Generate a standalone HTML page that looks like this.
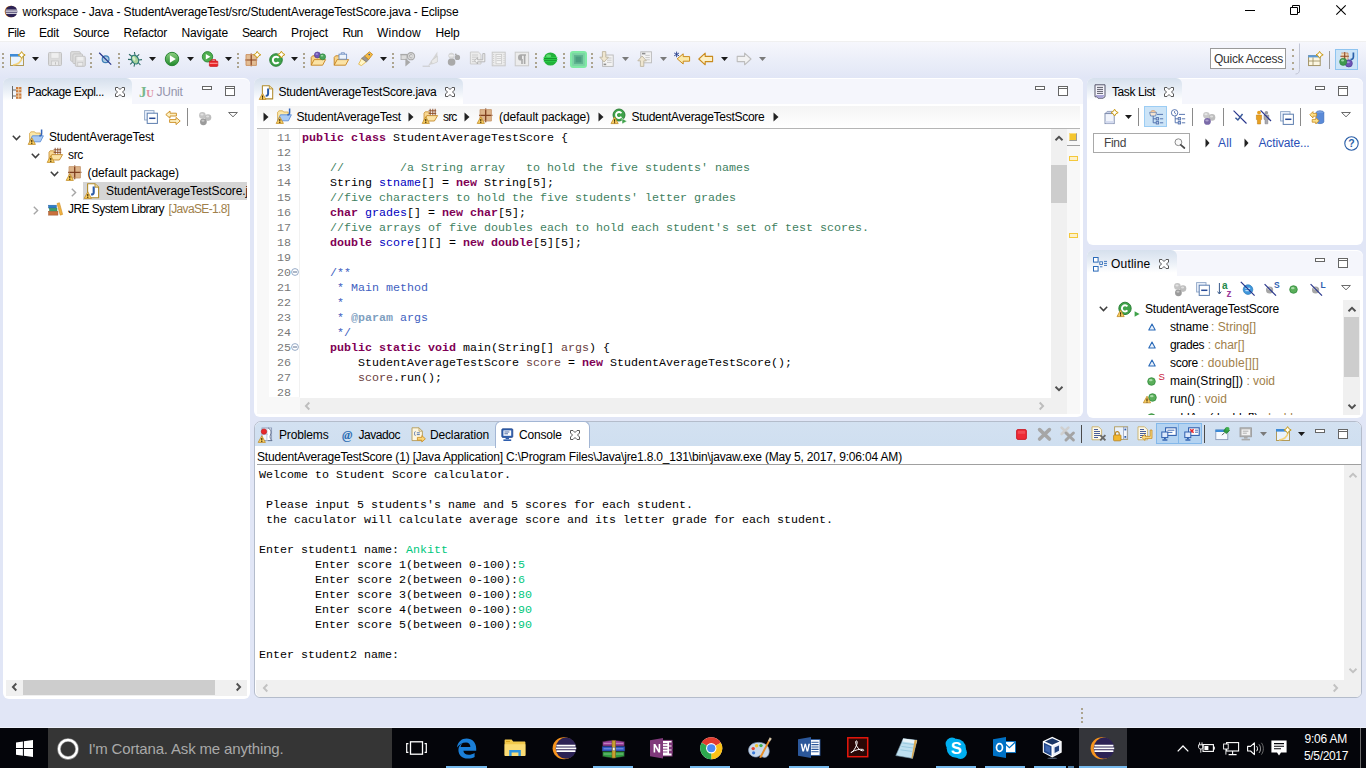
<!DOCTYPE html>
<html lang="en"><head><meta charset="utf-8"><title>workspace - Java - StudentAverageTest/src/StudentAverageTestScore.java - Eclipse</title>
<style>
html,body{margin:0;padding:0;}
body{width:1366px;height:768px;overflow:hidden;position:relative;background:#e1e6f6;font:12px "Liberation Sans", "DejaVu Sans", sans-serif;color:#000;}
body div,body span,body svg{position:absolute;box-sizing:border-box;}
body span{white-space:pre;}
svg{overflow:visible;}
.m{font-family:"Liberation Mono", "DejaVu Sans Mono", monospace;}
</style></head><body>
<div style="left:0px;top:0px;width:1366px;height:41px;background:#fff;"></div>
<div style="left:0px;top:41px;width:1366px;height:1px;background:#f0f0f0;"></div>
<div style="left:0px;top:42px;width:1366px;height:36px;background:linear-gradient(#f6f7fc,#eceff9 45%,#e1e6f6);"></div>
<div style="left:3px;top:78px;width:247px;height:621px;background:#fff;border-radius:6px;"></div>
<div style="left:3px;top:79px;width:247px;height:25px;background:#f5f6fc;border-radius:6px 6px 0 0;"></div>
<div style="left:3px;top:78px;width:129px;height:26px;background:linear-gradient(#d6e0ed,#e8eef6 45%,#fff 88%);border-radius:6px 6px 0 0;"></div>
<div style="left:254px;top:78px;width:829px;height:339px;background:#fff;border-radius:6px;"></div>
<div style="left:254px;top:79px;width:829px;height:25px;background:#f5f6fc;border-radius:6px 6px 0 0;"></div>
<div style="left:254px;top:78px;width:209px;height:26px;background:linear-gradient(#d6e0ed,#e8eef6 45%,#fff 88%);border-radius:6px 6px 0 0;"></div>
<div style="left:1087px;top:78px;width:276px;height:167px;background:#fff;border-radius:6px;"></div>
<div style="left:1087px;top:79px;width:276px;height:25px;background:#f5f6fc;border-radius:6px 6px 0 0;"></div>
<div style="left:1087px;top:78px;width:95px;height:26px;background:linear-gradient(#d6e0ed,#e8eef6 45%,#fff 88%);border-radius:6px 6px 0 0;"></div>
<div style="left:1087px;top:250px;width:276px;height:168px;background:#fff;border-radius:6px;"></div>
<div style="left:1087px;top:251px;width:276px;height:25px;background:#f5f6fc;border-radius:6px 6px 0 0;"></div>
<div style="left:1087px;top:250px;width:90px;height:26px;background:linear-gradient(#d6e0ed,#e8eef6 45%,#fff 88%);border-radius:6px 6px 0 0;"></div>
<div style="left:254px;top:421px;width:1108px;height:277px;background:#fff;border-radius:7px 7px 6px 6px;border:1px solid #b4bccb;"></div>
<div style="left:255px;top:422px;width:1106px;height:24px;background:linear-gradient(#d3e1f1,#cfdff0);border-radius:6px 6px 0 0;"></div>
<div style="left:495px;top:421px;width:95px;height:27px;background:#fff;border:1px solid #a3b6d4;border-bottom:none;border-radius:6px 6px 0 0;"></div>
<div style="left:0px;top:727px;width:1366px;height:1px;background:#eef1fa;"></div>
<div style="left:0px;top:728px;width:1366px;height:40px;background:#04050a;"></div>
<div style="left:48px;top:728px;width:344px;height:40px;background:#353535;"></div>
<div style="left:1079px;top:728px;width:48px;height:40px;background:#34353a;"></div>
<span style="left:22.5px;top:4px;line-height:16px;height:16px;letter-spacing:-0.156px;">workspace - Java - StudentAverageTest/src/StudentAverageTestScore.java - Eclipse</span>
<span style="left:7.5px;top:25px;line-height:16px;height:16px;letter-spacing:-0.461px;">File</span>
<span style="left:39px;top:25px;line-height:16px;height:16px;letter-spacing:-0.172px;">Edit</span>
<span style="left:73px;top:25px;line-height:16px;height:16px;letter-spacing:-0.339px;">Source</span>
<span style="left:123.5px;top:25px;line-height:16px;height:16px;letter-spacing:-0.232px;">Refactor</span>
<span style="left:181.5px;top:25px;line-height:16px;height:16px;letter-spacing:-0.109px;">Navigate</span>
<span style="left:242px;top:25px;line-height:16px;height:16px;letter-spacing:-0.589px;">Search</span>
<span style="left:291px;top:25px;line-height:16px;height:16px;letter-spacing:-0.051px;">Project</span>
<span style="left:342.5px;top:25px;line-height:16px;height:16px;letter-spacing:-0.672px;">Run</span>
<span style="left:377px;top:25px;line-height:16px;height:16px;letter-spacing:0.219px;">Window</span>
<span style="left:435.5px;top:25px;line-height:16px;height:16px;letter-spacing:-0.172px;">Help</span>
<div style="left:1210px;top:48px;width:76px;height:21px;background:#fff;border:1px solid #9a9a9a;"></div>
<span style="left:1214px;top:50.5px;line-height:16px;height:16px;color:#333;letter-spacing:-0.253px;">Quick Access</span>
<span style="left:27.5px;top:83.5px;line-height:16px;height:16px;letter-spacing:-0.459px;">Package Expl...</span>
<span style="left:156.5px;top:83.5px;line-height:16px;height:16px;color:#9494ac;letter-spacing:-0.269px;">JUnit</span>
<span style="left:278.5px;top:83.5px;line-height:16px;height:16px;letter-spacing:-0.234px;">StudentAverageTestScore.java</span>
<span style="left:1112px;top:83.5px;line-height:16px;height:16px;letter-spacing:-0.410px;">Task List</span>
<span style="left:1111px;top:255.5px;line-height:16px;height:16px;letter-spacing:0.210px;">Outline</span>
<div style="left:83px;top:182px;width:164px;height:18px;background:#d5d5d5;"></div>
<span style="left:49px;top:129px;line-height:16px;height:16px;letter-spacing:-0.159px;">StudentAverageTest</span>
<span style="left:68px;top:147px;line-height:16px;height:16px;letter-spacing:-0.333px;">src</span>
<span style="left:87.5px;top:165px;line-height:16px;height:16px;letter-spacing:-0.073px;">(default package)</span>
<span style="left:106px;top:183px;line-height:16px;height:16px;letter-spacing:-0.128px;width:141px;overflow:hidden;">StudentAverageTestScore.j</span>
<span style="left:68px;top:201px;line-height:16px;height:16px;letter-spacing:-0.557px;">JRE System Library</span>
<span style="left:168.5px;top:201px;line-height:16px;height:16px;color:#a0804a;letter-spacing:-0.642px;">[JavaSE-1.8]</span>
<div style="left:257px;top:106px;width:823px;height:22px;background:linear-gradient(#f4f4f4,#fff);"></div>
<div style="left:257px;top:128px;width:823px;height:1px;background:#b5b5b5;"></div>
<span style="left:296.5px;top:108.5px;line-height:16px;height:16px;letter-spacing:-0.187px;">StudentAverageTest</span>
<span style="left:443px;top:108.5px;line-height:16px;height:16px;letter-spacing:-0.833px;">src</span>
<span style="left:499px;top:108.5px;line-height:16px;height:16px;letter-spacing:-0.102px;">(default package)</span>
<span style="left:631.5px;top:108.5px;line-height:16px;height:16px;letter-spacing:-0.270px;">StudentAverageTestScore</span>
<svg style="left:263px;top:112px" width="6" height="10" viewBox="0 0 6 10"><path d="M0.5 0.5 L5.5 5 L0.5 9.5Z" fill="#222"/></svg>
<svg style="left:408.3px;top:112px" width="6" height="10" viewBox="0 0 6 10"><path d="M0.5 0.5 L5.5 5 L0.5 9.5Z" fill="#222"/></svg>
<svg style="left:464.3px;top:112px" width="6" height="10" viewBox="0 0 6 10"><path d="M0.5 0.5 L5.5 5 L0.5 9.5Z" fill="#222"/></svg>
<svg style="left:597.8px;top:112px" width="6" height="10" viewBox="0 0 6 10"><path d="M0.5 0.5 L5.5 5 L0.5 9.5Z" fill="#222"/></svg>
<svg style="left:772.5px;top:112px" width="6" height="10" viewBox="0 0 6 10"><path d="M0.5 0.5 L5.5 5 L0.5 9.5Z" fill="#222"/></svg>
<div style="left:1093px;top:133px;width:97px;height:20px;background:#fff;border:1px solid #a9a9a9;"></div>
<span style="left:1104px;top:135px;line-height:16px;height:16px;color:#444;letter-spacing:-0.336px;">Find</span>
<span style="left:1218px;top:135px;line-height:16px;height:16px;color:#2a4fb5;letter-spacing:0.219px;">All</span>
<span style="left:1258.5px;top:135px;line-height:16px;height:16px;color:#2a4fb5;letter-spacing:-0.153px;">Activate...</span>
<svg style="left:1204.5px;top:138px" width="5" height="10" viewBox="0 0 5 10"><path d="M0.5 0.5 L4.5 5 L0.5 9.5Z" fill="#222"/></svg>
<svg style="left:1244px;top:138px" width="5" height="10" viewBox="0 0 5 10"><path d="M0.5 0.5 L4.5 5 L0.5 9.5Z" fill="#222"/></svg>
<span style="left:1145px;top:301px;line-height:16px;height:16px;letter-spacing:-0.226px;">StudentAverageTestScore</span>
<span style="left:1170px;top:319px;line-height:16px;height:16px;letter-spacing:-0.143px;">stname</span>
<span style="left:1211px;top:319px;line-height:16px;height:16px;color:#a0804a;letter-spacing:0.031px;">: String[]</span>
<span style="left:1170px;top:337px;line-height:16px;height:16px;letter-spacing:-0.451px;">grades</span>
<span style="left:1207.8px;top:337px;line-height:16px;height:16px;color:#a0804a;letter-spacing:0.002px;">: char[]</span>
<span style="left:1170px;top:355px;line-height:16px;height:16px;letter-spacing:-0.269px;">score</span>
<span style="left:1200.7px;top:355px;line-height:16px;height:16px;color:#a0804a;letter-spacing:0.188px;">: double[][]</span>
<span style="left:1170px;top:373px;line-height:16px;height:16px;letter-spacing:0.069px;">main(String[])</span>
<span style="left:1246.4px;top:373px;line-height:16px;height:16px;color:#a0804a;letter-spacing:-0.015px;">: void</span>
<span style="left:1170px;top:391px;line-height:16px;height:16px;letter-spacing:-0.069px;">run()</span>
<span style="left:1198px;top:391px;line-height:16px;height:16px;color:#a0804a;letter-spacing:0.052px;">: void</span>
<div style="left:1140px;top:408px;width:203px;height:7px;overflow:hidden;"></div>
<span style="left:279px;top:426.5px;line-height:16px;height:16px;letter-spacing:-0.148px;">Problems</span>
<span style="left:358.5px;top:426.5px;line-height:16px;height:16px;letter-spacing:-0.458px;">Javadoc</span>
<span style="left:430px;top:426.5px;line-height:16px;height:16px;letter-spacing:-0.155px;">Declaration</span>
<span style="left:519px;top:426.5px;line-height:16px;height:16px;letter-spacing:-0.190px;">Console</span>
<span style="left:257px;top:449px;line-height:16px;height:16px;letter-spacing:-0.175px;">StudentAverageTestScore (1) [Java Application] C:\Program Files\Java\jre1.8.0_131\bin\javaw.exe (May 5, 2017, 9:06:04 AM)</span>
<div style="left:257px;top:464px;width:1104px;height:1px;background:#a0a0a0;"></div>
<span style="left:88.5px;top:738.5px;line-height:20px;height:20px;font-size:15px;color:#a9a9a9;letter-spacing:-0.159px;">I&#x27;m Cortana. Ask me anything.</span>
<span style="left:1304.5px;top:730.5px;line-height:16px;height:16px;color:#fff;letter-spacing:-0.219px;">9:06 AM</span>
<span style="left:1304px;top:747.5px;line-height:16px;height:16px;color:#fff;letter-spacing:-0.340px;">5/5/2017</span>
<div style="left:257px;top:129px;width:12px;height:285px;background:#f8f8f8;"></div>
<div style="left:269px;top:129px;width:31px;height:268px;background:#fff;"></div>
<div style="left:299px;top:129px;width:1px;height:268px;background:#f1f1f1;"></div>
<span class="m" style="left:277px;top:130.5px;line-height:15px;height:15px;font-size:11.67px;color:#787878;letter-spacing:0.000px;">11</span>
<span class="m" style="left:302px;top:130.5px;line-height:15px;height:15px;font-size:11.67px;font-weight:bold;color:#7f0055;letter-spacing:0.003px;">public</span>
<span class="m" style="left:351px;top:130.5px;line-height:15px;height:15px;font-size:11.67px;font-weight:bold;color:#7f0055;letter-spacing:0.003px;">class</span>
<span class="m" style="left:393px;top:130.5px;line-height:15px;height:15px;font-size:11.67px;letter-spacing:0.005px;">StudentAverageTestScore {</span>
<span class="m" style="left:277px;top:145.5px;line-height:15px;height:15px;font-size:11.67px;color:#787878;letter-spacing:0.000px;">12</span>
<span class="m" style="left:277px;top:160.5px;line-height:15px;height:15px;font-size:11.67px;color:#787878;letter-spacing:0.000px;">13</span>
<span class="m" style="left:330px;top:160.5px;line-height:15px;height:15px;font-size:11.67px;color:#3f7f5f;letter-spacing:0.005px;">//        /a String array   to hold the five students&#x27; names</span>
<span class="m" style="left:277px;top:175.5px;line-height:15px;height:15px;font-size:11.67px;color:#787878;letter-spacing:0.000px;">14</span>
<span class="m" style="left:330px;top:175.5px;line-height:15px;height:15px;font-size:11.67px;letter-spacing:0.003px;">String</span>
<span class="m" style="left:379px;top:175.5px;line-height:15px;height:15px;font-size:11.67px;color:#0000c0;letter-spacing:0.003px;">stname</span>
<span class="m" style="left:421px;top:175.5px;line-height:15px;height:15px;font-size:11.67px;letter-spacing:0.004px;">[] =</span>
<span class="m" style="left:456px;top:175.5px;line-height:15px;height:15px;font-size:11.67px;font-weight:bold;color:#7f0055;letter-spacing:0.000px;">new</span>
<span class="m" style="left:484px;top:175.5px;line-height:15px;height:15px;font-size:11.67px;letter-spacing:0.005px;">String[5];</span>
<span class="m" style="left:277px;top:190.5px;line-height:15px;height:15px;font-size:11.67px;color:#787878;letter-spacing:0.000px;">15</span>
<span class="m" style="left:330px;top:190.5px;line-height:15px;height:15px;font-size:11.67px;color:#3f7f5f;letter-spacing:0.005px;">//five characters to hold the five students&#x27; letter grades</span>
<span class="m" style="left:277px;top:205.5px;line-height:15px;height:15px;font-size:11.67px;color:#787878;letter-spacing:0.000px;">16</span>
<span class="m" style="left:330px;top:205.5px;line-height:15px;height:15px;font-size:11.67px;font-weight:bold;color:#7f0055;letter-spacing:0.004px;">char</span>
<span class="m" style="left:365px;top:205.5px;line-height:15px;height:15px;font-size:11.67px;color:#0000c0;letter-spacing:0.003px;">grades</span>
<span class="m" style="left:407px;top:205.5px;line-height:15px;height:15px;font-size:11.67px;letter-spacing:0.004px;">[] =</span>
<span class="m" style="left:442px;top:205.5px;line-height:15px;height:15px;font-size:11.67px;font-weight:bold;color:#7f0055;letter-spacing:0.000px;">new</span>
<span class="m" style="left:470px;top:205.5px;line-height:15px;height:15px;font-size:11.67px;font-weight:bold;color:#7f0055;letter-spacing:0.004px;">char</span>
<span class="m" style="left:498px;top:205.5px;line-height:15px;height:15px;font-size:11.67px;letter-spacing:0.004px;">[5];</span>
<span class="m" style="left:277px;top:220.5px;line-height:15px;height:15px;font-size:11.67px;color:#787878;letter-spacing:0.000px;">17</span>
<span class="m" style="left:330px;top:220.5px;line-height:15px;height:15px;font-size:11.67px;color:#3f7f5f;letter-spacing:0.005px;">//five arrays of five doubles each to hold each student&#x27;s set of test scores.</span>
<span class="m" style="left:277px;top:235.5px;line-height:15px;height:15px;font-size:11.67px;color:#787878;letter-spacing:0.000px;">18</span>
<span class="m" style="left:330px;top:235.5px;line-height:15px;height:15px;font-size:11.67px;font-weight:bold;color:#7f0055;letter-spacing:0.003px;">double</span>
<span class="m" style="left:379px;top:235.5px;line-height:15px;height:15px;font-size:11.67px;color:#0000c0;letter-spacing:0.003px;">score</span>
<span class="m" style="left:414px;top:235.5px;line-height:15px;height:15px;font-size:11.67px;letter-spacing:0.003px;">[][] =</span>
<span class="m" style="left:463px;top:235.5px;line-height:15px;height:15px;font-size:11.67px;font-weight:bold;color:#7f0055;letter-spacing:0.000px;">new</span>
<span class="m" style="left:491px;top:235.5px;line-height:15px;height:15px;font-size:11.67px;font-weight:bold;color:#7f0055;letter-spacing:0.003px;">double</span>
<span class="m" style="left:533px;top:235.5px;line-height:15px;height:15px;font-size:11.67px;letter-spacing:0.004px;">[5][5];</span>
<span class="m" style="left:277px;top:250.5px;line-height:15px;height:15px;font-size:11.67px;color:#787878;letter-spacing:0.000px;">19</span>
<span class="m" style="left:277px;top:265.5px;line-height:15px;height:15px;font-size:11.67px;color:#787878;letter-spacing:0.000px;">20</span>
<span class="m" style="left:330px;top:265.5px;line-height:15px;height:15px;font-size:11.67px;color:#3f5fbf;letter-spacing:0.000px;">/**</span>
<span class="m" style="left:277px;top:280.5px;line-height:15px;height:15px;font-size:11.67px;color:#787878;letter-spacing:0.000px;">21</span>
<span class="m" style="left:337px;top:280.5px;line-height:15px;height:15px;font-size:11.67px;color:#3f5fbf;letter-spacing:0.005px;">* Main method</span>
<span class="m" style="left:277px;top:295.5px;line-height:15px;height:15px;font-size:11.67px;color:#787878;letter-spacing:0.000px;">22</span>
<span class="m" style="left:337px;top:295.5px;line-height:15px;height:15px;font-size:11.67px;color:#3f5fbf;">*</span>
<span class="m" style="left:277px;top:310.5px;line-height:15px;height:15px;font-size:11.67px;color:#787878;letter-spacing:0.000px;">23</span>
<span class="m" style="left:337px;top:310.5px;line-height:15px;height:15px;font-size:11.67px;color:#3f5fbf;">*</span>
<span class="m" style="left:351px;top:310.5px;line-height:15px;height:15px;font-size:11.67px;font-weight:bold;color:#7f9fbf;letter-spacing:0.003px;">@param</span>
<span class="m" style="left:400px;top:310.5px;line-height:15px;height:15px;font-size:11.67px;color:#3f5fbf;letter-spacing:0.004px;">args</span>
<span class="m" style="left:277px;top:325.5px;line-height:15px;height:15px;font-size:11.67px;color:#787878;letter-spacing:0.000px;">24</span>
<span class="m" style="left:337px;top:325.5px;line-height:15px;height:15px;font-size:11.67px;color:#3f5fbf;letter-spacing:0.000px;">*/</span>
<span class="m" style="left:277px;top:340.5px;line-height:15px;height:15px;font-size:11.67px;color:#787878;letter-spacing:0.000px;">25</span>
<span class="m" style="left:330px;top:340.5px;line-height:15px;height:15px;font-size:11.67px;font-weight:bold;color:#7f0055;letter-spacing:0.003px;">public</span>
<span class="m" style="left:379px;top:340.5px;line-height:15px;height:15px;font-size:11.67px;font-weight:bold;color:#7f0055;letter-spacing:0.003px;">static</span>
<span class="m" style="left:428px;top:340.5px;line-height:15px;height:15px;font-size:11.67px;font-weight:bold;color:#7f0055;letter-spacing:0.004px;">void</span>
<span class="m" style="left:463px;top:340.5px;line-height:15px;height:15px;font-size:11.67px;letter-spacing:0.005px;">main(String[]</span>
<span class="m" style="left:561px;top:340.5px;line-height:15px;height:15px;font-size:11.67px;color:#6a3e3e;letter-spacing:0.004px;">args</span>
<span class="m" style="left:589px;top:340.5px;line-height:15px;height:15px;font-size:11.67px;letter-spacing:0.000px;">) {</span>
<span class="m" style="left:277px;top:355.5px;line-height:15px;height:15px;font-size:11.67px;color:#787878;letter-spacing:0.000px;">26</span>
<span class="m" style="left:358px;top:355.5px;line-height:15px;height:15px;font-size:11.67px;letter-spacing:0.005px;">StudentAverageTestScore</span>
<span class="m" style="left:526px;top:355.5px;line-height:15px;height:15px;font-size:11.67px;color:#6a3e3e;letter-spacing:0.003px;">score</span>
<span class="m" style="left:568px;top:355.5px;line-height:15px;height:15px;font-size:11.67px;">=</span>
<span class="m" style="left:582px;top:355.5px;line-height:15px;height:15px;font-size:11.67px;font-weight:bold;color:#7f0055;letter-spacing:0.000px;">new</span>
<span class="m" style="left:610px;top:355.5px;line-height:15px;height:15px;font-size:11.67px;letter-spacing:0.005px;">StudentAverageTestScore();</span>
<span class="m" style="left:277px;top:370.5px;line-height:15px;height:15px;font-size:11.67px;color:#787878;letter-spacing:0.000px;">27</span>
<span class="m" style="left:358px;top:370.5px;line-height:15px;height:15px;font-size:11.67px;color:#6a3e3e;letter-spacing:0.003px;">score</span>
<span class="m" style="left:393px;top:370.5px;line-height:15px;height:15px;font-size:11.67px;letter-spacing:0.004px;">.run();</span>
<span class="m" style="left:277px;top:385.5px;line-height:15px;height:15px;font-size:11.67px;color:#787878;letter-spacing:0.000px;">28</span>
<svg style="left:291px;top:268px" width="8" height="8" viewBox="0 0 8 8"><circle cx="4" cy="4" r="3.4" fill="#fff" stroke="#8aa0c0" stroke-width="0.9"/><path d="M2 4H6" stroke="#5a6f90" stroke-width="1"/></svg>
<svg style="left:291px;top:343px" width="8" height="8" viewBox="0 0 8 8"><circle cx="4" cy="4" r="3.4" fill="#fff" stroke="#8aa0c0" stroke-width="0.9"/><path d="M2 4H6" stroke="#5a6f90" stroke-width="1"/></svg>
<span class="m" style="left:259px;top:467.5px;line-height:15px;height:15px;font-size:11.67px;letter-spacing:0.005px;">Welcome to Student Score calculator.</span>
<span class="m" style="left:266px;top:497.5px;line-height:15px;height:15px;font-size:11.67px;letter-spacing:0.005px;">Please input 5 students&#x27;s name and 5 scores for each student.</span>
<span class="m" style="left:266px;top:512.5px;line-height:15px;height:15px;font-size:11.67px;letter-spacing:0.005px;">the caculator will calculate average score and its letter grade for each student.</span>
<span class="m" style="left:259px;top:542.5px;line-height:15px;height:15px;font-size:11.67px;letter-spacing:0.005px;">Enter student1 name:</span>
<span class="m" style="left:406px;top:542.5px;line-height:15px;height:15px;font-size:11.67px;color:#00c87d;letter-spacing:0.003px;">Ankitt</span>
<span class="m" style="left:315px;top:557.5px;line-height:15px;height:15px;font-size:11.67px;letter-spacing:0.005px;">Enter score 1(between 0-100):</span>
<span class="m" style="left:518px;top:557.5px;line-height:15px;height:15px;font-size:11.67px;color:#00c87d;">5</span>
<span class="m" style="left:315px;top:572.5px;line-height:15px;height:15px;font-size:11.67px;letter-spacing:0.005px;">Enter score 2(between 0-100):</span>
<span class="m" style="left:518px;top:572.5px;line-height:15px;height:15px;font-size:11.67px;color:#00c87d;">6</span>
<span class="m" style="left:315px;top:587.5px;line-height:15px;height:15px;font-size:11.67px;letter-spacing:0.005px;">Enter score 3(between 0-100):</span>
<span class="m" style="left:518px;top:587.5px;line-height:15px;height:15px;font-size:11.67px;color:#00c87d;letter-spacing:0.000px;">80</span>
<span class="m" style="left:315px;top:602.5px;line-height:15px;height:15px;font-size:11.67px;letter-spacing:0.005px;">Enter score 4(between 0-100):</span>
<span class="m" style="left:518px;top:602.5px;line-height:15px;height:15px;font-size:11.67px;color:#00c87d;letter-spacing:0.000px;">90</span>
<span class="m" style="left:315px;top:617.5px;line-height:15px;height:15px;font-size:11.67px;letter-spacing:0.005px;">Enter score 5(between 0-100):</span>
<span class="m" style="left:518px;top:617.5px;line-height:15px;height:15px;font-size:11.67px;color:#00c87d;letter-spacing:0.000px;">90</span>
<span class="m" style="left:259px;top:647.5px;line-height:15px;height:15px;font-size:11.67px;letter-spacing:0.005px;">Enter student2 name:</span>
<div style="left:2px;top:52.5px;width:2px;height:2px;background:#aca48f;"></div>
<div style="left:2px;top:57px;width:2px;height:2px;background:#aca48f;"></div>
<div style="left:2px;top:61.5px;width:2px;height:2px;background:#aca48f;"></div>
<div style="left:2px;top:66px;width:2px;height:2px;background:#aca48f;"></div>
<svg style="left:9px;top:51px;" width="16" height="16" viewBox="0 0 16 16"><rect x="1.5" y="3.5" width="13" height="11" fill="#eaf3fd" stroke="#b29a58"/><rect x="1" y="3" width="14" height="2.6" fill="#3d8ad6"/><path d="M4 14c5-.5 8-3 9-7" stroke="#f3d27a" stroke-width="1.6" fill="none"/><path d="M12.6 0.6l1.300 2.100 2.300 1.300-2.300 1.300-1.300 2.100-1.300-2.100-2.300-1.300 2.300-1.300z" fill="#fff8d8" stroke="#c99a1a" stroke-width="1" stroke-linejoin="round"/><path d="M12.6 2.5v3M11.1 4.0h3" stroke="#fff" stroke-width="1"/></svg>
<svg style="left:32px;top:57px;" width="7" height="4" viewBox="0 0 7 4"><path d="M0 0h7L3.5 4z" fill="#1a1a1a"/></svg>
<svg style="left:47px;top:51px;" width="16" height="16" viewBox="0 0 16 16"><path d="M1.5 2.5a1 1 0 0 1 1-1h11a1 1 0 0 1 1 1v11a1 1 0 0 1-1 1h-11a1 1 0 0 1-1-1z" fill="#dcdcdc" stroke="#c2c2c2"/><rect x="4" y="1.8" width="8" height="5.4" fill="#efefef" stroke="#cfcfcf" stroke-width="0.6"/><rect x="4.5" y="10" width="7" height="4.4" fill="#e9e9e9" stroke="#c4c4c4" stroke-width="0.7"/><path d="M8.5 11.2v2.4" stroke="#c0c0c0"/></svg>
<svg style="left:70px;top:51px;" width="16" height="16" viewBox="0 0 16 16"><g fill="#dedede" stroke="#c4c4c4"><rect x="0.7" y="0.7" width="9.6" height="9.6" rx="1"/><rect x="2.9" y="2.9" width="9.6" height="9.6" rx="1"/><rect x="5.3" y="5.3" width="10" height="10" rx="1"/></g><rect x="7.3" y="5.8" width="6" height="3.6" fill="#efefef"/><rect x="7.8" y="11.6" width="5" height="3.4" fill="#ececec" stroke="#c4c4c4" stroke-width="0.6"/></svg>
<div style="left:90px;top:52.5px;width:2px;height:2px;background:#aca48f;"></div>
<div style="left:90px;top:57px;width:2px;height:2px;background:#aca48f;"></div>
<div style="left:90px;top:61.5px;width:2px;height:2px;background:#aca48f;"></div>
<div style="left:90px;top:66px;width:2px;height:2px;background:#aca48f;"></div>
<svg style="left:98px;top:51px;" width="16" height="16" viewBox="0 0 16 16"><circle cx="7.6" cy="8.2" r="3.4" fill="#a9cbe3" stroke="#3f7fb6" stroke-width="1.2"/><path d="M1.2 1.8L13.2 13.6" stroke="#27348b" stroke-width="1.2"/></svg>
<div style="left:118px;top:52.5px;width:2px;height:2px;background:#aca48f;"></div>
<div style="left:118px;top:57px;width:2px;height:2px;background:#aca48f;"></div>
<div style="left:118px;top:61.5px;width:2px;height:2px;background:#aca48f;"></div>
<div style="left:118px;top:66px;width:2px;height:2px;background:#aca48f;"></div>
<svg style="left:127px;top:51px;" width="16" height="16" viewBox="0 0 16 16"><g stroke="#2d6b63" stroke-width="1.1" fill="none"><path d="M2 3.2l3.4 2.6M1 8.4l3.6.2M3.2 13.4l2.6-2.6M7.4 1l.6 3M12.2 3.4L10 5.4M15 8.6l-3.4.4M13.4 14l-2.6-3M7 15.6l.6-2.6"/></g><ellipse cx="8" cy="8.6" rx="3.3" ry="4.6" transform="rotate(-28 8 8.6)" fill="#a6d39a" stroke="#2d7a78" stroke-width="1.2"/><ellipse cx="7" cy="7.6" rx="1.2" ry="2.2" transform="rotate(-28 7 7.6)" fill="#d7efcf"/></svg>
<svg style="left:149px;top:57px;" width="7" height="4" viewBox="0 0 7 4"><path d="M0 0h7L3.5 4z" fill="#1a1a1a"/></svg>
<svg style="left:164px;top:51px;" width="16" height="16" viewBox="0 0 16 16"><defs><linearGradient id="gr" x1="0" y1="0" x2="0" y2="1"><stop offset="0" stop-color="#8fd083"/><stop offset="1" stop-color="#1f8a2c"/></linearGradient></defs><circle cx="8" cy="8" r="6.7" fill="url(#gr)" stroke="#2a8535" stroke-width="1"/><path d="M5.9 4.2L11.8 8 5.9 11.8z" fill="#fff"/></svg>
<svg style="left:187px;top:57px;" width="7" height="4" viewBox="0 0 7 4"><path d="M0 0h7L3.5 4z" fill="#1a1a1a"/></svg>
<svg style="left:201px;top:51px;" width="16" height="16" viewBox="0 0 16 16"><circle cx="6.5" cy="5.8" r="5.2" fill="#4fae4f" stroke="#2a8535" stroke-width="0.9"/><path d="M4.8 3L9.4 5.8 4.8 8.6z" fill="#fff"/><rect x="8.4" y="10" width="8.4" height="5.4" rx="0.8" fill="#e8272a" stroke="#c4161a" stroke-width="0.7"/><path d="M10.8 10V8.7h3.6V10" stroke="#d81e22" stroke-width="1.1" fill="none"/><path d="M8.6 12.3h8" stroke="#ffb0b0" stroke-width="0.9"/></svg>
<svg style="left:225px;top:57px;" width="7" height="4" viewBox="0 0 7 4"><path d="M0 0h7L3.5 4z" fill="#1a1a1a"/></svg>
<div style="left:237px;top:52.5px;width:2px;height:2px;background:#aca48f;"></div>
<div style="left:237px;top:57px;width:2px;height:2px;background:#aca48f;"></div>
<div style="left:237px;top:61.5px;width:2px;height:2px;background:#aca48f;"></div>
<div style="left:237px;top:66px;width:2px;height:2px;background:#aca48f;"></div>
<svg style="left:245px;top:51px;" width="16" height="16" viewBox="0 0 16 16"><rect x="1" y="3.600" width="10.400" height="10.800" fill="#e3bd94"/><path d="M0.200 9h12M6.200 2.600v12.600" stroke="#8a4422" stroke-width="1.200"/><path d="M1 3.6h10.4v10.8H1z" fill="none" stroke="#c98f5e" stroke-width="0.9"/><path d="M12.2 0.4l1.300 2.100 2.300 1.300-2.300 1.300-1.300 2.100-1.300-2.100-2.300-1.300 2.300-1.300z" fill="#fff8d8" stroke="#c99a1a" stroke-width="1" stroke-linejoin="round"/><path d="M12.2 2.3v3M10.7 3.8h3" stroke="#fff" stroke-width="1"/></svg>
<svg style="left:269px;top:51px;" width="16" height="16" viewBox="0 0 16 16"><circle cx="7" cy="9" r="6.3" fill="#3fa24a" stroke="#257a30" stroke-width="0.9"/><path d="M9.7 6.9A3.3 3.3 0 1 0 9.7 11.1" stroke="#fff" stroke-width="2" fill="none"/><path d="M12.4 0.2l1.300 2.100 2.300 1.300-2.300 1.300-1.300 2.100-1.300-2.100-2.300-1.300 2.300-1.300z" fill="#fff8d8" stroke="#c99a1a" stroke-width="1" stroke-linejoin="round"/><path d="M12.4 2.1v3M10.9 3.6h3" stroke="#fff" stroke-width="1"/></svg>
<svg style="left:291px;top:57px;" width="7" height="4" viewBox="0 0 7 4"><path d="M0 0h7L3.5 4z" fill="#1a1a1a"/></svg>
<div style="left:303px;top:52.5px;width:2px;height:2px;background:#aca48f;"></div>
<div style="left:303px;top:57px;width:2px;height:2px;background:#aca48f;"></div>
<div style="left:303px;top:61.5px;width:2px;height:2px;background:#aca48f;"></div>
<div style="left:303px;top:66px;width:2px;height:2px;background:#aca48f;"></div>
<svg style="left:310px;top:51px;" width="16" height="16" viewBox="0 0 16 16"><path d="M1.2 14.2V6.4l1.4-1.6h4l1 1.4h5.6v2" fill="#f8d48a" stroke="#c5821e" stroke-width="0.9" stroke-linejoin="round"/><path d="M1.2 14.2l3-5.6h11.4l-3 5.6z" fill="#fbe3a6" stroke="#c5821e" stroke-width="0.9" stroke-linejoin="round"/><circle cx="7.4" cy="4" r="3" fill="#6f55b5" stroke="#4b3790" stroke-width="0.6"/><circle cx="12.6" cy="5.8" r="3" fill="#49a55a" stroke="#2b7f3d" stroke-width="0.6"/><ellipse cx="6.8" cy="3" rx="1.3" ry=".8" fill="#b2a2e0"/><ellipse cx="12" cy="4.8" rx="1.3" ry=".8" fill="#a5dcae"/></svg>
<svg style="left:333px;top:51px;" width="16" height="16" viewBox="0 0 16 16"><path d="M1.2 14.2V6.4l1.4-1.6h4l1 1.4h5.6v2" fill="#f8d48a" stroke="#c5821e" stroke-width="0.9" stroke-linejoin="round"/><path d="M1.2 14.2l3-5.6h11.4l-3 5.6z" fill="#fbe3a6" stroke="#c5821e" stroke-width="0.9" stroke-linejoin="round"/><rect x="6" y="3.2" width="7.6" height="5" fill="#eef4fb" stroke="#6f8fc2" stroke-width="0.9"/><path d="M8.2 3V1.8h3.2V3" stroke="#6f8fc2" stroke-width="0.9" fill="none"/></svg>
<svg style="left:357px;top:51px;" width="16" height="16" viewBox="0 0 16 16"><path d="M1.6 13.2l3.2-6 4.6 3.4-5 4z" fill="#fff6c8" stroke="#e3b43c" stroke-width="0.8"/><path d="M4.6 7.4l3-2.4 4 3.6-2.2 2.4z" fill="#9a9590" stroke="#77726c" stroke-width="0.7"/><path d="M7.6 5L12.4 0.8l3.2 2.6-4 5.2z" fill="#f3bb48" stroke="#c4871c" stroke-width="0.8"/><circle cx="12.2" cy="3.6" r="0.8" fill="#2f54a6"/></svg>
<svg style="left:380px;top:57px;" width="7" height="4" viewBox="0 0 7 4"><path d="M0 0h7L3.5 4z" fill="#1a1a1a"/></svg>
<div style="left:392px;top:52.5px;width:2px;height:2px;background:#aca48f;"></div>
<div style="left:392px;top:57px;width:2px;height:2px;background:#aca48f;"></div>
<div style="left:392px;top:61.5px;width:2px;height:2px;background:#aca48f;"></div>
<div style="left:392px;top:66px;width:2px;height:2px;background:#aca48f;"></div>
<svg style="left:400px;top:51px;" width="16" height="16" viewBox="0 0 16 16"><rect x="1" y="3.6" width="6" height="5" fill="#dcdcdc" stroke="#a9a9a9" stroke-width="0.8"/><path d="M0.4 3.6h7.4" stroke="#a9a9a9" stroke-width="1.4"/><path d="M5.4 7.4v8l5-4.2z" fill="#a9a9a9"/><circle cx="11" cy="5.2" r="3.6" fill="#dcdcdc" stroke="#a9a9a9" stroke-width="1.1"/><path d="M12.4 4.2a1.7 1.7 0 1 0 0 2" stroke="#a9a9a9" fill="none" stroke-width="0.9"/></svg>
<svg style="left:422px;top:51px;" width="16" height="16" viewBox="0 0 16 16"><path d="M15.400 0.600v10.400l-9.400 3.800z" fill="#d4d4d4"/><path d="M15.400 5.200l-6.200 4.800 1.200 3 5-2z" fill="#e9e9e9" stroke="#c4c4c4" stroke-width="0.500"/><path d="M0.600 15.200h7.400" stroke="#c4c4c4" stroke-width="0.900"/></svg>
<svg style="left:447px;top:51px;" width="16" height="16" viewBox="0 0 16 16"><circle cx="4.6" cy="11" r="3.8" fill="#a9a9a9"/><circle cx="4.4" cy="4.8" r="2.7" fill="#dcdcdc" stroke="#c9c9c9" stroke-width="0.6"/><path d="M2.2 4.8h4.4" stroke="#fff" stroke-width="0.8"/><circle cx="10.4" cy="6.4" r="2.7" fill="#a9a9a9"/><circle cx="8.8" cy="3.4" r="0.9" fill="#a9a9a9"/></svg>
<svg style="left:469px;top:51px;" width="16" height="16" viewBox="0 0 16 16"><path d="M1.4 1h8l2.6 2.6V13H1.4z" fill="#ebebeb" stroke="#c9c9c9" stroke-width="0.9"/><path d="M3 4h6M3 6.2h6M3 8.4h4M3 10.6h3" stroke="#c9c9c9" stroke-width="0.9"/><path d="M13.8 2.6v6.2H8.6v-2.2l-3 3.2 3 3.2v-2.2h7.2V2.6z" fill="#f4f4f4" stroke="#a9a9a9" stroke-width="0.8" stroke-linejoin="round"/></svg>
<svg style="left:491px;top:51px;" width="16" height="16" viewBox="0 0 16 16"><rect x="1.2" y="1.2" width="13" height="13.6" fill="#ececec" stroke="#c9c9c9" stroke-width="1"/><path d="M2.6 3v10.4M13 3v10.4" stroke="#c9c9c9" stroke-width="0.9" stroke-dasharray="1 1"/><rect x="5" y="3.4" width="5.6" height="9.4" fill="#f6f6f6" stroke="#c9c9c9" stroke-width="0.8"/><path d="M5.6 5.6h4.4M5.6 7.6h4.4M5.6 9.6h4.4" stroke="#c9c9c9" stroke-width="0.9"/></svg>
<svg style="left:514px;top:51px;" width="16" height="16" viewBox="0 0 16 16"><rect x="1.2" y="1.2" width="13.4" height="13.6" fill="#ececec" stroke="#c9c9c9" stroke-width="1"/><path d="M12 4H7.2a2.4 2.4 0 0 0 0 4.8H8V13M10.6 4v9" stroke="#a9a9a9" stroke-width="1.6" fill="none"/><path d="M5 6.4a2.3 2.3 0 0 1 2.3-2.3H8v4.6h-.7A2.3 2.3 0 0 1 5 6.4z" fill="#a9a9a9"/></svg>
<div style="left:535px;top:52.5px;width:2px;height:2px;background:#aca48f;"></div>
<div style="left:535px;top:57px;width:2px;height:2px;background:#aca48f;"></div>
<div style="left:535px;top:61.5px;width:2px;height:2px;background:#aca48f;"></div>
<div style="left:535px;top:66px;width:2px;height:2px;background:#aca48f;"></div>
<svg style="left:543px;top:51px;" width="16" height="16" viewBox="0 0 16 16"><circle cx="7.4" cy="8" r="6.6" fill="#22b23a"/><ellipse cx="5.6" cy="5" rx="2.6" ry="1.8" fill="#6fe07f" opacity=".8"/><path d="M0.4 6.6h14M0.2 8.4h14.4M0.6 10.2h13.6" stroke="#2edc50" stroke-width="0.8"/><path d="M0.8 7.5h13.2M0.8 9.3h13.2" stroke="#128a28" stroke-width="0.7"/></svg>
<div style="left:563px;top:52.5px;width:2px;height:2px;background:#aca48f;"></div>
<div style="left:563px;top:57px;width:2px;height:2px;background:#aca48f;"></div>
<div style="left:563px;top:61.5px;width:2px;height:2px;background:#aca48f;"></div>
<div style="left:563px;top:66px;width:2px;height:2px;background:#aca48f;"></div>
<svg style="left:570px;top:50.5px;" width="17" height="17" viewBox="0 0 17 17"><rect x="0" y="0" width="17" height="17" rx="3" fill="#7fe9a4"/><rect x="2.2" y="2.2" width="12.6" height="12.6" fill="#7bd0a4"/><rect x="4" y="4" width="9" height="9" fill="#5fb58f"/><rect x="5.6" y="5.6" width="5.8" height="5.8" fill="#4c9d80"/></svg>
<div style="left:591px;top:52.5px;width:2px;height:2px;background:#aca48f;"></div>
<div style="left:591px;top:57px;width:2px;height:2px;background:#aca48f;"></div>
<div style="left:591px;top:61.5px;width:2px;height:2px;background:#aca48f;"></div>
<div style="left:591px;top:66px;width:2px;height:2px;background:#aca48f;"></div>
<svg style="left:599px;top:51px;" width="16" height="16" viewBox="0 0 16 16"><rect x="3.6" y="4" width="10.6" height="11.4" fill="#f3f3f3" stroke="#b9b9b9" stroke-width="0.9"/><path d="M8 7h4.6M8 9.2h4.6M8 11.4h4.6" stroke="#c4c4c4" stroke-width="0.9"/><rect x="4.6" y="12.6" width="2.6" height="1.6" fill="#8f8f8f"/><path d="M3.4 0.6h3.4v5.6h2.6L5.1 11 0.8 6.2h2.6z" fill="#efe6d0" stroke="#b8ae98" stroke-width="0.8" stroke-linejoin="round"/></svg>
<svg style="left:622px;top:57px;" width="7" height="4" viewBox="0 0 7 4"><path d="M0 0h7L3.5 4z" fill="#7a7a7a"/></svg>
<svg style="left:637px;top:51px;" width="16" height="16" viewBox="0 0 16 16"><rect x="3.8" y="0.8" width="10.6" height="11" fill="#f3f3f3" stroke="#b9b9b9" stroke-width="0.9"/><path d="M8.4 4.4h4.4M8.4 6.6h4.4M8.4 8.8h4.4" stroke="#c4c4c4" stroke-width="0.9"/><rect x="5" y="1.8" width="3.4" height="1.6" fill="#8f8f8f"/><path d="M3.4 15.4h3.4V9.8h2.6L5.1 5 0.8 9.8h2.6z" fill="#efe6d0" stroke="#b8ae98" stroke-width="0.8" stroke-linejoin="round"/></svg>
<svg style="left:660px;top:57px;" width="7" height="4" viewBox="0 0 7 4"><path d="M0 0h7L3.5 4z" fill="#7a7a7a"/></svg>
<svg style="left:674px;top:51px;" width="16" height="16" viewBox="0 0 16 16"><path d="M3.2 7.8l6-5v2.8h6.4v4.6H9.2V13z" fill="#fbe9a8" stroke="#c98a1c" stroke-width="1" stroke-linejoin="round"/><path d="M2.6 0.6v5.6M0.2 2l4.8 2.8M5 2L0.2 4.8" stroke="#27408b" stroke-width="0.9"/></svg>
<svg style="left:698px;top:51px;" width="16" height="16" viewBox="0 0 16 16"><path d="M0.8 8l6.4-5.8v3.2h7.4v5.2H7.2v3.2z" fill="#fdf0c4" stroke="#c98a1c" stroke-width="1.1" stroke-linejoin="round"/></svg>
<svg style="left:721px;top:57px;" width="7" height="4" viewBox="0 0 7 4"><path d="M0 0h7L3.5 4z" fill="#1a1a1a"/></svg>
<svg style="left:736px;top:51px;" width="16" height="16" viewBox="0 0 16 16"><path d="M15 8L8.6 2.2v3.2H1.2v5.2h7.4v3.2z" fill="#f2f2f2" stroke="#bdbdbd" stroke-width="1.1" stroke-linejoin="round"/></svg>
<svg style="left:759px;top:57px;" width="7" height="4" viewBox="0 0 7 4"><path d="M0 0h7L3.5 4z" fill="#7a7a7a"/></svg>
<div style="left:1292px;top:48.5px;width:2px;height:2px;background:#b0a892;"></div>
<div style="left:1292px;top:55px;width:2px;height:2px;background:#b0a892;"></div>
<div style="left:1292px;top:61.5px;width:2px;height:2px;background:#b0a892;"></div>
<div style="left:1292px;top:68px;width:2px;height:2px;background:#b0a892;"></div>
<svg style="left:1293px;top:43px" width="8" height="32" viewBox="0 0 8 32"><path d="M6.500 0.500v26c0 3-1.500 4.500-4 4.500" fill="none" stroke="#c3c7d6" stroke-width="1"/></svg>
<svg style="left:1307px;top:51px;" width="16" height="16" viewBox="0 0 16 16"><rect x="1.600" y="4.600" width="11.600" height="10" fill="#fbf6e2" stroke="#9a8a5a" stroke-width="0.900"/><rect x="1.200" y="4.200" width="12.400" height="2.200" fill="#5a9ad8"/><path d="M6 6.400v8M1.600 10h11.600" stroke="#9a8a5a" stroke-width="0.800"/><path d="M12.6 0.4l1.300 2.100 2.300 1.300-2.300 1.300-1.300 2.100-1.300-2.100-2.300-1.300 2.300-1.300z" fill="#fff8d8" stroke="#c99a1a" stroke-width="1" stroke-linejoin="round"/><path d="M12.6 2.3v3M11.1 3.8h3" stroke="#fff" stroke-width="1"/></svg>
<div style="left:1329px;top:51px;width:1px;height:18px;background:#9a9a9a;"></div>
<div style="left:1335px;top:49px;width:23px;height:21px;background:#cce4f7;border:1px solid #8fc4f0;"></div>
<svg style="left:1338.5px;top:52px;" width="16" height="16" viewBox="0 0 16 16"><rect x="2.400" y="1" width="6.600" height="6.600" fill="#f0d8b8"/><path d="M1.400 4.300h8.600M5.700 0v8.600" stroke="#8a4422" stroke-width="1.100"/><path d="M2.400 1h6.600v6.600" fill="none" stroke="#b87a4a" stroke-width="0.700"/><circle cx="9.800" cy="11.400" r="3.600" fill="#6f55b5" stroke="#4b3790" stroke-width="0.600"/><ellipse cx="9.200" cy="10.200" rx="1.600" ry="1" fill="#a898d8"/><circle cx="4.200" cy="9.800" r="3.600" fill="#3f9a4f" stroke="#2b7f3d" stroke-width="0.600"/><ellipse cx="3.600" cy="8.600" rx="1.600" ry="1" fill="#9ad8a4"/><path d="M14.400 0.600v4.200c0 1.900-1.100 2.700-2.900 2.500" stroke="#2a5fa8" stroke-width="1.700" fill="none"/></svg>
<svg style="left:4px;top:5px;" width="14" height="13" viewBox="0 0 16 16"><ellipse cx="7.7" cy="8" rx="7.5" ry="7.2" fill="#f7941e"/><ellipse cx="8.4" cy="8" rx="7.4" ry="7.2" fill="#2c2255"/><path d="M1.6 6.300h14M1.300 8.300h14.600M1.800 10.300h13.800" stroke="#fff" stroke-width="1.100"/></svg>
<svg style="left:1245px;top:5px" width="102" height="10" viewBox="0 0 102 10"><path d="M0 5.500h10" stroke="#000" stroke-width="1"/><path d="M45.500 2.500h7v7h-7zM47.500 2.500v-2h7v7h-2" fill="none" stroke="#000" stroke-width="1"/><path d="M91.300 0.300l9.400 9.400M100.700 0.300l-9.400 9.400" stroke="#000" stroke-width="1.100"/></svg>
<svg style="left:11px;top:84.5px;" width="11" height="14" viewBox="0 0 11 14"><path d="M1.5 1v13M1.5 5h3.5M1.5 11h3.5" stroke="#6a6a6a" stroke-width="1" fill="none"/><rect x="5" y="2" width="5.4" height="5.4" fill="#c97a3c"/><rect x="5" y="8.4" width="5.4" height="5.4" fill="#c97a3c"/><path d="M5 4.7h5.4M7.7 2v5.4M5 11.1h5.4M7.7 8.4v5.4" stroke="#f6d8b0" stroke-width="0.9"/></svg>
<svg style="left:115px;top:87px;" width="10" height="10" viewBox="0 0 10 10"><path d="M0.500 0.500H3L5 2.500 7 0.500H9.500V3L7.500 5l2 2v2.500H7L5 7.500 3 9.500H0.500V7l2-2-2-2z" fill="#fff" stroke="#585858" stroke-width="1" stroke-linejoin="miter"/></svg>
<svg style="left:138.5px;top:84px;" width="16" height="16" viewBox="0 0 16 16"><text x="0" y="12.500" font-family="Liberation Serif, serif" font-weight="bold" font-size="15" fill="#78b88e">J</text><text x="7.300" y="12.900" font-family="Liberation Serif, serif" font-weight="bold" font-size="10.500" fill="#e08e9c">U</text></svg>
<svg style="left:202px;top:86px;" width="10" height="4" viewBox="0 0 10 4"><rect x="0.5" y="0.5" width="9" height="3" fill="#fff" stroke="#666"/></svg>
<svg style="left:225px;top:86px;" width="10" height="10" viewBox="0 0 10 10"><rect x="0.5" y="0.5" width="9" height="9" fill="#fff" stroke="#666"/><path d="M0.500 2.500h9" stroke="#666" stroke-width="1"/></svg>
<svg style="left:144px;top:110px;" width="14" height="14" viewBox="0 0 14 14"><rect x="0.6" y="0.6" width="9.4" height="9.4" fill="#eaf1fb" stroke="#8fa6c6" stroke-width="0.9"/><rect x="3.2" y="3.2" width="10.2" height="10.2" fill="#fff" stroke="#5d7eaf" stroke-width="1"/><path d="M5.2 8.3h6.2" stroke="#274a96" stroke-width="1.5"/></svg>
<svg style="left:165px;top:110px;" width="16" height="16" viewBox="0 0 16 16"><path d="M0.8 4.6L5 1v2.2h6.4v2.8H5v2.2z" fill="#fdf0c4" stroke="#c98a1c" stroke-width="0.9" stroke-linejoin="round"/><path d="M15.2 11L11 7.4v2.2H4.6v2.8H11v2.2z" fill="#fdf0c4" stroke="#c98a1c" stroke-width="0.9" stroke-linejoin="round"/></svg>
<div style="left:187px;top:108px;width:1px;height:18px;background:#8a8a8a;"></div>
<svg style="left:198px;top:110.5px;" width="14" height="14" viewBox="0 0 14 14"><circle cx="4.4" cy="4.4" r="3.3" fill="#c4c4c4"/><circle cx="10" cy="6.6" r="3.3" fill="#bdbdbd"/><circle cx="5.4" cy="10.8" r="3.4" fill="#9b9b9b"/><ellipse cx="4" cy="3.4" rx="1.6" ry="1" fill="#e2e2e2"/><ellipse cx="9.6" cy="5.6" rx="1.6" ry="1" fill="#dedede"/><ellipse cx="5" cy="9.8" rx="1.6" ry="1" fill="#c6c6c6"/></svg>
<svg style="left:228px;top:112px;" width="10" height="5.5" viewBox="0 0 10 5.5"><path d="M0.6 0.5h8.8L5 4.8z" fill="#fff" stroke="#5a5a5a" stroke-width="0.9" stroke-linejoin="round"/></svg>
<svg style="left:12px;top:135px;" width="9" height="6" viewBox="0 0 9 6"><path d="M0.8 0.8L4.5 4.6 8.2 0.8" fill="none" stroke="#3e3e3e" stroke-width="1.5"/></svg>
<svg style="left:28px;top:129px;" width="16" height="16" viewBox="0 0 16 16"><path d="M1.6 12.8V4.2l1.4-1.4h3.6l1 1.2h4.6v2" fill="#fbe7a8" stroke="#d3a545" stroke-width="0.8" stroke-linejoin="round"/><path d="M1.6 12.8L4.4 6.8h11l-3 6z" fill="#a9cbf5" stroke="#5f8fd6" stroke-width="0.9" stroke-linejoin="round"/><path d="M13.6 0.4v4.4c0 1.5-.9 2.1-2.3 1.9" stroke="#3565b8" stroke-width="1.5" fill="none"/><path d="M3.8 8.799999999999999l3.6 6.6h-7.2z" fill="#f9cf62" stroke="#c08a24" stroke-width="0.8" stroke-linejoin="round"/><path d="M3.8 11.1v2.4M3.8 14.1v1" stroke="#3a2400" stroke-width="1.1"/></svg>
<svg style="left:31px;top:153px;" width="9" height="6" viewBox="0 0 9 6"><path d="M0.8 0.8L4.5 4.6 8.2 0.8" fill="none" stroke="#3e3e3e" stroke-width="1.5"/></svg>
<svg style="left:47px;top:147px;" width="16" height="16" viewBox="0 0 16 16"><path d="M2 13V5.2l1.2-1.4h3.4l1 1.2h1" fill="#f8d894" stroke="#c58a2a" stroke-width="0.8" stroke-linejoin="round"/><path d="M2 13l2.8-5.4h10.8l-3.2 5.4z" fill="#fbe3a6" stroke="#c58a2a" stroke-width="0.9" stroke-linejoin="round"/><path d="M6.6 2.8h7.6M6.6 5.4h7.6M8.2 0.8v6.4M10.8 0.8v6.4M13.2 0.8v6.4" stroke="#8a4a22" stroke-width="0.9"/><path d="M3.8 8.799999999999999l3.6 6.6h-7.2z" fill="#f9cf62" stroke="#c08a24" stroke-width="0.8" stroke-linejoin="round"/><path d="M3.8 11.1v2.4M3.8 14.1v1" stroke="#3a2400" stroke-width="1.1"/></svg>
<svg style="left:50px;top:171px;" width="9" height="6" viewBox="0 0 9 6"><path d="M0.8 0.8L4.5 4.6 8.2 0.8" fill="none" stroke="#3e3e3e" stroke-width="1.5"/></svg>
<svg style="left:66px;top:165px;" width="16" height="16" viewBox="0 0 16 16"><rect x="3" y="1.6" width="11.400" height="11.400" fill="#ddb48a"/><path d="M2 7.300h13.400M8.700 0.400v13.800" stroke="#7f3f1f" stroke-width="1.300"/><path d="M3 1.6h11.4v11.4H3z" fill="none" stroke="#c49468" stroke-width="0.8"/><path d="M3.8 8.799999999999999l3.6 6.6h-7.2z" fill="#f9cf62" stroke="#c08a24" stroke-width="0.8" stroke-linejoin="round"/><path d="M3.8 11.1v2.4M3.8 14.1v1" stroke="#3a2400" stroke-width="1.1"/></svg>
<svg style="left:71px;top:188px;" width="6" height="9" viewBox="0 0 6 9"><path d="M0.8 0.8L4.6 4.5 0.8 8.2" fill="none" stroke="#a6a6a6" stroke-width="1.4"/></svg>
<svg style="left:84px;top:183px;" width="16" height="16" viewBox="0 0 16 16"><path d="M3.600 0.800h7.400l3.600 3.400v10.600H3.600z" fill="#fff" stroke="#b08a2a" stroke-width="1.100" stroke-linejoin="round"/><path d="M11 0.800v3.400h3.600" fill="#f0dca0" stroke="#b08a2a" stroke-width="0.900"/><path d="M9.700 3.600v5.800c0 1.600-1 2.200-2.600 1.900" stroke="#2a5aa8" stroke-width="2.100" fill="none"/><path d="M3.8 8.799999999999999l3.6 6.6h-7.2z" fill="#f9cf62" stroke="#c08a24" stroke-width="0.8" stroke-linejoin="round"/><path d="M3.8 11.1v2.4M3.8 14.1v1" stroke="#3a2400" stroke-width="1.1"/></svg>
<svg style="left:33px;top:206px;" width="6" height="9" viewBox="0 0 6 9"><path d="M0.8 0.8L4.6 4.5 0.8 8.2" fill="none" stroke="#a6a6a6" stroke-width="1.4"/></svg>
<svg style="left:47.5px;top:202px;" width="15" height="15" viewBox="0 0 16 16"><rect x="0.6" y="3.4" width="8.4" height="3" fill="#2f7fc9" stroke="#1f5f9f" stroke-width="0.5"/><rect x="1.6" y="6.6" width="8" height="3.2" fill="#3f9f6a" stroke="#2a7a4a" stroke-width="0.5"/><rect x="0.6" y="10" width="10" height="4" fill="#c9703c" stroke="#9a4f24" stroke-width="0.5"/><path d="M9.6 1.6l2.6-0.8 3.4 12.4-2.6 0.8z" fill="#f1b243" stroke="#c98a1c" stroke-width="0.6"/></svg>
<div style="left:6px;top:680px;width:241px;height:16px;background:#f0f0f0;"></div>
<div style="left:23px;top:680px;width:192px;height:15px;background:#cdcdcd;"></div>
<svg style="left:10.5px;top:682px" width="7" height="10" viewBox="0 0 7 10"><path d="M5.300 1.500L1.900 5l3.400 3.500" fill="none" stroke="#505050" stroke-width="1.900"/></svg>
<svg style="left:234.5px;top:682px" width="7" height="10" viewBox="0 0 7 10"><path d="M1.700 1.500L5.100 5l-3.400 3.500" fill="none" stroke="#505050" stroke-width="1.900"/></svg>
<svg style="left:258.5px;top:84.5px;" width="15" height="15" viewBox="0 0 16 16"><path d="M3.600 0.800h7.400l3.600 3.400v10.600H3.600z" fill="#fff" stroke="#b08a2a" stroke-width="1.100" stroke-linejoin="round"/><path d="M11 0.800v3.400h3.600" fill="#f0dca0" stroke="#b08a2a" stroke-width="0.900"/><path d="M9.700 3.600v5.800c0 1.600-1 2.200-2.600 1.900" stroke="#2a5aa8" stroke-width="2.100" fill="none"/><path d="M3.8 8.799999999999999l3.6 6.6h-7.2z" fill="#f9cf62" stroke="#c08a24" stroke-width="0.8" stroke-linejoin="round"/><path d="M3.8 11.1v2.4M3.8 14.1v1" stroke="#3a2400" stroke-width="1.1"/></svg>
<svg style="left:445px;top:87px;" width="10" height="10" viewBox="0 0 10 10"><path d="M0.500 0.500H3L5 2.500 7 0.500H9.500V3L7.500 5l2 2v2.500H7L5 7.500 3 9.500H0.500V7l2-2-2-2z" fill="#fff" stroke="#585858" stroke-width="1" stroke-linejoin="miter"/></svg>
<svg style="left:1035px;top:86px;" width="10" height="4" viewBox="0 0 10 4"><rect x="0.5" y="0.5" width="9" height="3" fill="#fff" stroke="#666"/></svg>
<svg style="left:1058px;top:86px;" width="10" height="10" viewBox="0 0 10 10"><rect x="0.5" y="0.5" width="9" height="9" fill="#fff" stroke="#666"/><path d="M0.500 2.500h9" stroke="#666" stroke-width="1"/></svg>
<svg style="left:276px;top:108px;" width="16" height="16" viewBox="0 0 16 16"><path d="M1.6 12.8V4.2l1.4-1.4h3.6l1 1.2h4.6v2" fill="#fbe7a8" stroke="#d3a545" stroke-width="0.8" stroke-linejoin="round"/><path d="M1.6 12.8L4.4 6.8h11l-3 6z" fill="#a9cbf5" stroke="#5f8fd6" stroke-width="0.9" stroke-linejoin="round"/><path d="M13.6 0.4v4.4c0 1.5-.9 2.1-2.3 1.9" stroke="#3565b8" stroke-width="1.5" fill="none"/><path d="M3.8 8.799999999999999l3.6 6.6h-7.2z" fill="#f9cf62" stroke="#c08a24" stroke-width="0.8" stroke-linejoin="round"/><path d="M3.8 11.1v2.4M3.8 14.1v1" stroke="#3a2400" stroke-width="1.1"/></svg>
<svg style="left:422px;top:108px;" width="16" height="16" viewBox="0 0 16 16"><path d="M2 13V5.2l1.2-1.4h3.4l1 1.2h1" fill="#f8d894" stroke="#c58a2a" stroke-width="0.8" stroke-linejoin="round"/><path d="M2 13l2.8-5.4h10.8l-3.2 5.4z" fill="#fbe3a6" stroke="#c58a2a" stroke-width="0.9" stroke-linejoin="round"/><path d="M6.6 2.8h7.6M6.6 5.4h7.6M8.2 0.8v6.4M10.8 0.8v6.4M13.2 0.8v6.4" stroke="#8a4a22" stroke-width="0.9"/><path d="M3.8 8.799999999999999l3.6 6.6h-7.2z" fill="#f9cf62" stroke="#c08a24" stroke-width="0.8" stroke-linejoin="round"/><path d="M3.8 11.1v2.4M3.8 14.1v1" stroke="#3a2400" stroke-width="1.1"/></svg>
<svg style="left:477px;top:108px;" width="16" height="16" viewBox="0 0 16 16"><rect x="3" y="1.6" width="11.400" height="11.400" fill="#ddb48a"/><path d="M2 7.300h13.400M8.700 0.400v13.800" stroke="#7f3f1f" stroke-width="1.300"/><path d="M3 1.6h11.4v11.4H3z" fill="none" stroke="#c49468" stroke-width="0.8"/><path d="M3.8 8.799999999999999l3.6 6.6h-7.2z" fill="#f9cf62" stroke="#c08a24" stroke-width="0.8" stroke-linejoin="round"/><path d="M3.8 11.1v2.4M3.8 14.1v1" stroke="#3a2400" stroke-width="1.1"/></svg>
<svg style="left:611px;top:108px;" width="16" height="16" viewBox="0 0 16 16"><circle cx="8" cy="7" r="6" fill="#3fa24a" stroke="#257a30" stroke-width="0.9"/><path d="M10.4 5.2A3 3 0 1 0 10.4 8.8" stroke="#fff" stroke-width="1.8" fill="none"/><path d="M11 10.4l5 2.8-5 2.8z" fill="#3fa24a" stroke="#fff" stroke-width="0.5"/><path d="M3.6 9.0l3.6 6.6h-7.2z" fill="#f9cf62" stroke="#c08a24" stroke-width="0.8" stroke-linejoin="round"/><path d="M3.6 11.3v2.4M3.6 14.3v1" stroke="#3a2400" stroke-width="1.1"/></svg>
<svg style="left:1094px;top:84px;" width="12" height="15" viewBox="0 0 12 15"><path d="M1 0.8h10v12l-2 1.4H4l-1-1.4H1z" fill="#f4f4fb" stroke="#55556a" stroke-width="1" stroke-linejoin="round"/><path d="M3 3.4h6M3 5.4h6M3 7.4h6M3 9.4h6" stroke="#4a4a5a" stroke-width="0.9"/><path d="M1.4 11h9.2l-1.8 3H4z" fill="#a9a5d6"/></svg>
<svg style="left:1164px;top:87px;" width="10" height="10" viewBox="0 0 10 10"><path d="M0.500 0.500H3L5 2.500 7 0.500H9.500V3L7.500 5l2 2v2.500H7L5 7.500 3 9.500H0.500V7l2-2-2-2z" fill="#fff" stroke="#585858" stroke-width="1" stroke-linejoin="miter"/></svg>
<svg style="left:1315px;top:86px;" width="10" height="4" viewBox="0 0 10 4"><rect x="0.5" y="0.5" width="9" height="3" fill="#fff" stroke="#666"/></svg>
<svg style="left:1338px;top:86px;" width="10" height="10" viewBox="0 0 10 10"><rect x="0.5" y="0.5" width="9" height="9" fill="#fff" stroke="#666"/><path d="M0.500 2.500h9" stroke="#666" stroke-width="1"/></svg>
<svg style="left:1104px;top:109px;" width="16" height="16" viewBox="0 0 16 16"><path d="M1 4.6l2.2-2.2h7v2.2z" fill="#c9d2e8" stroke="#7a88aa" stroke-width="0.7"/><rect x="1" y="4.6" width="9.2" height="10" fill="#f1f4fb" stroke="#7a88aa" stroke-width="0.9"/><path d="M1.6 12h8v2.4h-8z" fill="#d5dcf0"/><path d="M10.6 0.2l1.300 2.100 2.300 1.300-2.300 1.300-1.300 2.100-1.300-2.100-2.300-1.300 2.300-1.300z" fill="#fff8d8" stroke="#c99a1a" stroke-width="1" stroke-linejoin="round"/><path d="M10.6 2.1v3M9.1 3.6h3" stroke="#fff" stroke-width="1"/></svg>
<svg style="left:1125px;top:115px;" width="7" height="4" viewBox="0 0 7 4"><path d="M0 0h7L3.5 4z" fill="#1a1a1a"/></svg>
<div style="left:1138px;top:108px;width:1px;height:18px;background:#8a8a8a;"></div>
<div style="left:1144px;top:106px;width:23px;height:21px;background:#cce4f7;border:1px solid #9ccdf4;"></div>
<svg style="left:1148px;top:108.5px;" width="16" height="16" viewBox="0 0 16 16"><path d="M1.6 3.4h7l-1 3.6h-5z" fill="#f3e3d0" stroke="#6a86b8" stroke-width="0.9"/><path d="M2.6 3.2c.4-2.2 4.6-2.2 5 0" fill="#f3c8a0" stroke="#c9946a" stroke-width="0.7"/><path d="M5.2 7v6.8h3M5.2 9.8h3M9 5.4h6" stroke="#4a6aa8" stroke-width="0.9" fill="none"/><rect x="8.2" y="8.6" width="2.4" height="2.4" fill="#b8c8e8" stroke="#4a6aa8" stroke-width="0.8"/><rect x="8.2" y="12.6" width="2.4" height="2.4" fill="#b8c8e8" stroke="#4a6aa8" stroke-width="0.8"/><path d="M11.8 9.8h3.4M11.8 13.8h3.4" stroke="#4a6aa8" stroke-width="0.9"/></svg>
<svg style="left:1170px;top:108.5px;" width="16" height="16" viewBox="0 0 16 16"><circle cx="4.6" cy="3.8" r="3.2" fill="#fff" stroke="#4a6aa8" stroke-width="0.9"/><path d="M4.6 2v2l1.4 1" stroke="#4a6aa8" stroke-width="0.8" fill="none"/><path d="M5.2 7.2v6.6h3M5.2 9.8h3M9 5.4h6" stroke="#4a6aa8" stroke-width="0.9" fill="none"/><rect x="8.2" y="8.6" width="2.4" height="2.4" fill="#b8c8e8" stroke="#4a6aa8" stroke-width="0.8"/><rect x="8.2" y="12.6" width="2.4" height="2.4" fill="#b8c8e8" stroke="#4a6aa8" stroke-width="0.8"/><path d="M11.8 9.8h3.4M11.8 13.8h3.4" stroke="#4a6aa8" stroke-width="0.9"/></svg>
<div style="left:1192px;top:108px;width:1px;height:18px;background:#8a8a8a;"></div>
<svg style="left:1202px;top:110.5px;" width="14" height="14" viewBox="0 0 14 14"><circle cx="4.4" cy="4.2" r="3.3" fill="#c9c9c9"/><circle cx="10" cy="6.4" r="3.3" fill="#bdbdbd"/><circle cx="5.4" cy="10.4" r="3.4" fill="#7a6aa8"/><ellipse cx="4" cy="3.2" rx="1.6" ry="1" fill="#e6e6e6"/><ellipse cx="9.6" cy="5.4" rx="1.6" ry="1" fill="#dedede"/><ellipse cx="5" cy="9.4" rx="1.7" ry="1" fill="#b0a4d0"/></svg>
<div style="left:1223px;top:108px;width:1px;height:18px;background:#8a8a8a;"></div>
<svg style="left:1233px;top:110px;" width="15" height="15" viewBox="0 0 16 16"><path d="M0.6 0.6L14.4 14.4" stroke="#27348b" stroke-width="1.2"/><path d="M2.6 8.2l2.6 2.4 5-6.4" stroke="#3a5a9a" stroke-width="1.6" fill="none"/></svg>
<svg style="left:1254.5px;top:109.5px;" width="16" height="16" viewBox="0 0 16 16"><circle cx="4" cy="2.6" r="1.9" fill="#e8a020"/><path d="M1.4 5h5.2v4.6H5.6v4.4H2.4V9.6H1.4z" fill="#e8a020" stroke="#b87810" stroke-width="0.5"/><circle cx="11.4" cy="2.8" r="1.8" fill="#9a9aa0"/><path d="M9 5h4.8v4.4h-1v4.4h-2.8V9.4H9z" fill="#aaaab0" stroke="#7a7a80" stroke-width="0.5"/><path d="M5.6 0.4L16 11" stroke="#27348b" stroke-width="1.2"/></svg>
<svg style="left:1280px;top:110.5px;" width="14" height="14" viewBox="0 0 14 14"><rect x="0.6" y="0.6" width="9.4" height="9.4" fill="#eaf1fb" stroke="#8fa6c6" stroke-width="0.9"/><rect x="3.2" y="3.2" width="10.2" height="10.2" fill="#fff" stroke="#5d7eaf" stroke-width="1"/><path d="M5.2 8.3h6.2" stroke="#274a96" stroke-width="1.5"/></svg>
<div style="left:1300px;top:108px;width:1px;height:18px;background:#8a8a8a;"></div>
<svg style="left:1308.5px;top:109.5px;" width="16" height="16" viewBox="0 0 16 16"><ellipse cx="11" cy="2.6" rx="3.8" ry="1.8" fill="#8ab0e8" stroke="#3a6ab8" stroke-width="0.7"/><path d="M7.2 2.6v9.2c0 2.4 7.6 2.4 7.6 0V2.6" fill="#5a8ad8" stroke="#3a6ab8" stroke-width="0.7"/><path d="M0.8 4.8L4 1.6v1.8h3.6v2.8H4V8z" fill="#fbe08a" stroke="#c98a1c" stroke-width="0.8" stroke-linejoin="round"/><path d="M10 10.8L6.8 14v-1.8H3.2V9.4h3.6V7.6z" fill="#fbe08a" stroke="#c98a1c" stroke-width="0.8" stroke-linejoin="round"/></svg>
<svg style="left:1341px;top:112px;" width="10" height="5.5" viewBox="0 0 10 5.5"><path d="M0.6 0.5h8.8L5 4.8z" fill="#fff" stroke="#5a5a5a" stroke-width="0.9" stroke-linejoin="round"/></svg>
<svg style="left:1174px;top:137.5px;" width="11" height="11" viewBox="0 0 11 11"><circle cx="4.4" cy="4.2" r="3.4" fill="#fafafa" stroke="#8a8a8a" stroke-width="1"/><path d="M6.8 6.8l3.6 3.2" stroke="#4a4a4a" stroke-width="1.7" stroke-linecap="round"/></svg>
<svg style="left:1343.5px;top:135.5px;" width="15" height="15" viewBox="0 0 15 15"><circle cx="7.5" cy="7.5" r="6.7" fill="#fff" stroke="#2a5fa8" stroke-width="1.1"/><text x="7.5" y="11.4" text-anchor="middle" font-family="Liberation Sans, sans-serif" font-weight="bold" font-size="10.5" fill="#2a5fa8">?</text></svg>
<svg style="left:1093px;top:256.5px;" width="14.5" height="14.5" viewBox="0 0 14.5 14.5"><rect x="0.5" y="0.5" width="4.6" height="4.6" fill="#fff" stroke="#2a6ab8"/><rect x="0.5" y="9.5" width="4.6" height="4.6" fill="#fff" stroke="#2a6ab8"/><rect x="6.8" y="4.8" width="2.6" height="2.6" fill="#fff" stroke="#2a6ab8" stroke-width="0.9"/><path d="M11 4.4h3M11 6.4h3M11 8.4h3M7 9.8h2.4" stroke="#2a6ab8" stroke-width="0.9"/></svg>
<svg style="left:1159px;top:259px;" width="10" height="10" viewBox="0 0 10 10"><path d="M0.500 0.500H3L5 2.500 7 0.500H9.500V3L7.500 5l2 2v2.500H7L5 7.500 3 9.500H0.500V7l2-2-2-2z" fill="#fff" stroke="#585858" stroke-width="1" stroke-linejoin="miter"/></svg>
<svg style="left:1315px;top:258px;" width="10" height="4" viewBox="0 0 10 4"><rect x="0.5" y="0.5" width="9" height="3" fill="#fff" stroke="#666"/></svg>
<svg style="left:1338px;top:258px;" width="10" height="10" viewBox="0 0 10 10"><rect x="0.5" y="0.5" width="9" height="9" fill="#fff" stroke="#666"/><path d="M0.500 2.500h9" stroke="#666" stroke-width="1"/></svg>
<svg style="left:1173px;top:281.5px;" width="14" height="14" viewBox="0 0 14 14"><circle cx="4.4" cy="4.4" r="3.3" fill="#c4c4c4"/><circle cx="10" cy="6.6" r="3.3" fill="#bdbdbd"/><circle cx="5.4" cy="10.8" r="3.4" fill="#9b9b9b"/><ellipse cx="4" cy="3.4" rx="1.6" ry="1" fill="#e2e2e2"/><ellipse cx="9.6" cy="5.6" rx="1.6" ry="1" fill="#dedede"/><ellipse cx="5" cy="9.8" rx="1.6" ry="1" fill="#c6c6c6"/></svg>
<svg style="left:1196px;top:282px;" width="14" height="14" viewBox="0 0 14 14"><rect x="0.6" y="0.6" width="9.4" height="9.4" fill="#eaf1fb" stroke="#8fa6c6" stroke-width="0.9"/><rect x="3.2" y="3.2" width="10.2" height="10.2" fill="#fff" stroke="#5d7eaf" stroke-width="1"/><path d="M5.2 8.3h6.2" stroke="#274a96" stroke-width="1.5"/></svg>
<svg style="left:1217px;top:281px;" width="16" height="16" viewBox="0 0 16 16"><path d="M2.4 2v10.6M0.6 10.6l1.8 2.4 1.8-2.4" stroke="#3a5a8a" stroke-width="1" fill="none"/><text x="5" y="8" font-family="Liberation Sans, sans-serif" font-weight="bold" font-size="10" fill="#1f8a4a">a</text><text x="9.400" y="15.600" font-family="Liberation Sans, sans-serif" font-weight="bold" font-size="10" fill="#9a3a9a">z</text></svg>
<svg style="left:1240px;top:281px;" width="16" height="16" viewBox="0 0 16 16"><circle cx="8" cy="8.6" r="4.8" fill="#3f97dc" stroke="#2a78b8" stroke-width="0.7"/><path d="M5.4 7.4h4.8M5.4 9.6h3.6" stroke="#bfe0f8" stroke-width="1.3"/><path d="M0.8 0.8L14.6 14.6" stroke="#27348b" stroke-width="1.2"/></svg>
<svg style="left:1264px;top:281px;" width="16" height="16" viewBox="0 0 16 16"><circle cx="5.6" cy="9" r="3.6" fill="#a6a6a6"/><ellipse cx="5" cy="7.8" rx="1.8" ry="1.1" fill="#d0d0d0"/><path d="M0.6 3.2L12 14.6" stroke="#27348b" stroke-width="1.2"/><text x="10" y="6.6" font-family="Liberation Sans, sans-serif" font-weight="bold" font-size="8.500" fill="#2f5fb0">S</text></svg>
<svg style="left:1289px;top:285px;" width="9" height="9" viewBox="0 0 9 9"><circle cx="4.5" cy="4.5" r="3.8" fill="#5aae5a" stroke="#2f8a3a" stroke-width="0.8"/><ellipse cx="3.8" cy="3.2" rx="1.8" ry="1.1" fill="#a8dca8"/></svg>
<svg style="left:1310px;top:281px;" width="16" height="16" viewBox="0 0 16 16"><circle cx="5.6" cy="9" r="3.6" fill="#a6a6a6"/><ellipse cx="5" cy="7.8" rx="1.8" ry="1.1" fill="#d0d0d0"/><path d="M0.6 3.2L12 14.6" stroke="#27348b" stroke-width="1.2"/><text x="10.4" y="6.6" font-family="Liberation Sans, sans-serif" font-weight="bold" font-size="8.500" fill="#2f5fb0">L</text></svg>
<svg style="left:1341px;top:285px;" width="10" height="5.5" viewBox="0 0 10 5.5"><path d="M0.6 0.5h8.8L5 4.8z" fill="#fff" stroke="#5a5a5a" stroke-width="0.9" stroke-linejoin="round"/></svg>
<svg style="left:1099px;top:306px;" width="9" height="6" viewBox="0 0 9 6"><path d="M0.8 0.8L4.5 4.6 8.2 0.8" fill="none" stroke="#3e3e3e" stroke-width="1.5"/></svg>
<svg style="left:1117px;top:301px;" width="23" height="16" viewBox="0 0 23 16"><circle cx="8" cy="7.4" r="6.2" fill="#3fa24a" stroke="#257a30" stroke-width="0.9"/><path d="M10.4 5.4A3.1 3.1 0 1 0 10.4 9.4" stroke="#fff" stroke-width="1.9" fill="none"/><path d="M17.6 10.2l5 2.8-5 2.8z" fill="#3fa24a"/><path d="M3.6 9.0l3.6 6.6h-7.2z" fill="#f9cf62" stroke="#c08a24" stroke-width="0.8" stroke-linejoin="round"/><path d="M3.6 11.3v2.4M3.6 14.3v1" stroke="#3a2400" stroke-width="1.1"/></svg>
<svg style="left:1147.5px;top:323px;" width="8" height="8" viewBox="0 0 8 8"><path d="M4 1L7.2 7H0.8z" fill="#eaf2fc" stroke="#2a6ab8" stroke-width="1.1" stroke-linejoin="round"/></svg>
<svg style="left:1147.5px;top:341px;" width="8" height="8" viewBox="0 0 8 8"><path d="M4 1L7.2 7H0.8z" fill="#eaf2fc" stroke="#2a6ab8" stroke-width="1.1" stroke-linejoin="round"/></svg>
<svg style="left:1147.5px;top:359px;" width="8" height="8" viewBox="0 0 8 8"><path d="M4 1L7.2 7H0.8z" fill="#eaf2fc" stroke="#2a6ab8" stroke-width="1.1" stroke-linejoin="round"/></svg>
<svg style="left:1147px;top:376.5px;" width="9" height="9" viewBox="0 0 9 9"><circle cx="4.5" cy="4.5" r="3.8" fill="#5aae5a" stroke="#2f8a3a" stroke-width="0.8"/><ellipse cx="3.8" cy="3.2" rx="1.8" ry="1.1" fill="#a8dca8"/></svg>
<span style="left:1158.5px;top:372px;font-size:9.5px;line-height:10px;color:#c8203a;">S</span>
<svg style="left:1147.5px;top:393px;" width="9" height="9" viewBox="0 0 9 9"><circle cx="4.5" cy="4.5" r="3.8" fill="#5aae5a" stroke="#2f8a3a" stroke-width="0.8"/><ellipse cx="3.8" cy="3.2" rx="1.8" ry="1.1" fill="#a8dca8"/></svg>
<svg style="left:1143px;top:396px" width="8" height="8" viewBox="0 0 8 8"><path d="M4 0.19999999999999996l3.6 6.6h-7.2z" fill="#f9cf62" stroke="#c08a24" stroke-width="0.8" stroke-linejoin="round"/><path d="M4 2.5v2.4M4 5.5v1" stroke="#3a2400" stroke-width="1.1"/></svg>
<div style="left:1140px;top:409px;width:203px;height:6px;overflow:hidden;"><span style="left:30px;top:0.5px;line-height:16px;letter-spacing:-0.2px;">addAvg(double[])</span><span style="left:118px;top:0.5px;line-height:16px;color:#a0804a;letter-spacing:-0.2px;">: double</span><svg style="left:7px;top:4px" width="9" height="9" viewBox="0 0 9 9"><circle cx="4.5" cy="4.5" r="3.8" fill="#5aae5a" stroke="#2f8a3a" stroke-width="0.8"/><ellipse cx="3.8" cy="3.2" rx="1.8" ry="1.1" fill="#a8dca8"/></svg></div>
<div style="left:1343px;top:300px;width:17px;height:115px;background:#f0f0f0;"></div>
<div style="left:1344px;top:317px;width:15px;height:60px;background:#cdcdcd;"></div>
<svg style="left:1346.5px;top:305.5px" width="10" height="7" viewBox="0 0 10 7"><path d="M1.500 5.300L5 1.900l3.500 3.400" fill="none" stroke="#505050" stroke-width="1.900"/></svg>
<svg style="left:1346.5px;top:403px" width="10" height="7" viewBox="0 0 10 7"><path d="M1.500 1.700L5 5.100l3.500-3.400" fill="none" stroke="#505050" stroke-width="1.900"/></svg>
<div style="left:1051px;top:129px;width:16px;height:269px;background:#f0f0f0;"></div>
<div style="left:1051px;top:165px;width:16px;height:38px;background:#cdcdcd;"></div>
<svg style="left:1054px;top:134.5px" width="10" height="7" viewBox="0 0 10 7"><path d="M1.5 5.3L5 1.9l3.5 3.4" fill="none" stroke="#505050" stroke-width="1.900"/></svg>
<svg style="left:1054px;top:385px" width="10" height="7" viewBox="0 0 10 7"><path d="M1.5 1.7L5 5.1l3.5-3.4" fill="none" stroke="#505050" stroke-width="1.900"/></svg>
<div style="left:1067px;top:129px;width:13px;height:285px;background:#f8f8f8;"></div>
<div style="left:1069px;top:133px;width:8px;height:8px;background:#f4c52e;border-right:1px solid #9a9a9a;border-bottom:1px solid #9a9a9a;border-top:1px solid #f8dc80;border-left:1px solid #f8dc80;"></div>
<div style="left:1067px;top:145px;width:13px;height:1px;background:#a0a0a0;"></div>
<div style="left:1069px;top:156px;width:9px;height:5px;background:#fdf1c9;border:1px solid #f4c83c;"></div>
<div style="left:1069px;top:233px;width:9px;height:5px;background:#fdf1c9;border:1px solid #f4c83c;"></div>
<div style="left:300px;top:398px;width:751px;height:16px;background:#f0f0f0;"></div>
<div style="left:1051px;top:398px;width:16px;height:16px;background:#f0f0f0;"></div>
<svg style="left:304px;top:401px" width="7" height="10" viewBox="0 0 7 10"><path d="M5.3 1.5L1.9 5l3.4 3.5" fill="none" stroke="#bdbdbd" stroke-width="1.900"/></svg>
<svg style="left:1038px;top:401px" width="7" height="10" viewBox="0 0 7 10"><path d="M1.7 1.5L5.1 5l-3.4 3.500" fill="none" stroke="#bdbdbd" stroke-width="1.900"/></svg>
<div style="left:257px;top:397px;width:43px;height:17px;background:#f8f8f8;"></div>
<svg style="left:258px;top:427px;" width="16" height="16" viewBox="0 0 16 16"><rect x="4" y="1" width="9.6" height="12.6" fill="#f4f6fb" stroke="#8a9ab8" stroke-width="0.9"/><path d="M8.8 1v12.6M4 7.4h9.6" stroke="#b8c4da" stroke-width="0.8"/><path d="M10 1c2.8 1 3.6 4 2.4 7 -.8 2.4 0 4.4 1.6 5.6h-4" fill="#fff" stroke="#5a6a8a" stroke-width="0.9"/><circle cx="6" cy="4.600" r="2.700" fill="#e8272a" stroke="#b8161a" stroke-width="0.600"/><path d="M3.8 8.799999999999999l3.6 6.6h-7.2z" fill="#f9cf62" stroke="#c08a24" stroke-width="0.8" stroke-linejoin="round"/><path d="M3.8 11.1v2.4M3.8 14.1v1" stroke="#3a2400" stroke-width="1.1"/></svg>
<svg style="left:341.5px;top:428.5px;" width="12" height="14" viewBox="0 0 12 14"><text x="0" y="10.4" font-family="Liberation Serif, serif" font-style="italic" font-weight="bold" font-size="12.5" fill="#2f6fb4">@</text></svg>
<svg style="left:411px;top:426.8px;" width="16" height="16" viewBox="0 0 16 16"><path d="M1 0.8h7l3.4 3.4v9.4H1z" fill="#fdf6e0" stroke="#b29a58" stroke-width="0.9" stroke-linejoin="round"/><path d="M8 0.8v3.4h3.4" fill="none" stroke="#b29a58" stroke-width="0.8"/><path d="M4.4 4.4c-1.2.6-1.2 3.6 0 4.4M5.8 5.8h3M5.8 7.6h3" stroke="#4a6aa8" stroke-width="0.9" fill="none"/><path d="M6.4 10.4h4.4V8.6l3.6 3.2-3.6 3.2v-1.8H6.4z" fill="#fbd67a" stroke="#c98a1c" stroke-width="0.8" stroke-linejoin="round"/></svg>
<svg style="left:501px;top:427.8px;" width="12.6" height="13.4" viewBox="0 0 12.6 13.4"><rect x="0.8" y="0.8" width="11" height="8.6" rx="1" fill="#2f5fae" stroke="#24488a" stroke-width="0.8"/><rect x="2.4" y="2.4" width="7.8" height="5.4" fill="#fff"/><path d="M3.4 4h5M3.4 5.8h3.6" stroke="#3a5a9a" stroke-width="0.9"/><path d="M4.6 9.6h3.4v1.6h-3.4z" fill="#2f5fae"/><path d="M2.4 12.2h7.8" stroke="#2f5fae" stroke-width="1.6"/></svg>
<svg style="left:570px;top:430px;" width="10" height="10" viewBox="0 0 10 10"><path d="M0.500 0.500H3L5 2.500 7 0.500H9.500V3L7.500 5l2 2v2.500H7L5 7.500 3 9.500H0.500V7l2-2-2-2z" fill="#fff" stroke="#585858" stroke-width="1" stroke-linejoin="miter"/></svg>
<svg style="left:1016px;top:428.8px;" width="11" height="11" viewBox="0 0 11 11"><rect x="0.6" y="0.6" width="9.8" height="9.8" rx="1.3" fill="#ee2a35" stroke="#c81822" stroke-width="0.9"/><rect x="1.8" y="1.8" width="7.4" height="3" fill="#f8646c" opacity=".55"/></svg>
<svg style="left:1038px;top:427.6px;" width="13" height="12.6" viewBox="0 0 13 12.6"><path d="M1.6 1.6l9.8 9.4M11.4 1.6L1.6 11" stroke="#a6a6a6" stroke-width="3.6" stroke-linecap="round"/></svg>
<svg style="left:1060px;top:426px;" width="15" height="16" viewBox="0 0 15 16"><path d="M1.6 1.6l6.8 6.4M8.4 1.6L1.6 8" stroke="#cfcfcf" stroke-width="2.6" stroke-linecap="round"/><path d="M6 7l7.4 7M13.4 7L6 14" stroke="#a3a3a3" stroke-width="3" stroke-linecap="round"/></svg>
<div style="left:1081px;top:425px;width:1px;height:18px;background:#4a4a4a;"></div>
<svg style="left:1091px;top:426px;" width="16" height="16" viewBox="0 0 16 16"><path d="M1 0.8h6.6l3 3v10H1z" fill="#fdf9ea" stroke="#c9b06a" stroke-width="0.9" stroke-linejoin="round"/><path d="M3 3.500h4M3 5.500h6M3 7.500h6M3 9.500h6M3 11.500h4" stroke="#4a5f9a" stroke-width="1"/><path d="M9.2 9.2l5.2 5.2M14.4 9.2l-5.2 5.2" stroke="#6a6a6a" stroke-width="1.9"/></svg>
<svg style="left:1113px;top:426px;" width="16" height="16" viewBox="0 0 16 16"><rect x="1.6" y="0.8" width="13" height="12.6" fill="#eaf2fc" stroke="#b29a58" stroke-width="0.9"/><rect x="10.4" y="1.2" width="3.8" height="11.8" fill="#f4f6fb" stroke="#8a9ab8" stroke-width="0.7"/><rect x="11.4" y="2.6" width="1.8" height="1.8" fill="#2f5fae"/><rect x="11.4" y="10" width="1.8" height="1.8" fill="#2f5fae"/><rect x="0.6" y="9" width="7.4" height="5.8" rx="0.8" fill="#f0b62e" stroke="#b8821c" stroke-width="0.8"/><path d="M2.4 9V7.4c0-2.4 3.8-2.4 3.8 0V9" stroke="#b8821c" stroke-width="1.1" fill="none"/></svg>
<svg style="left:1137px;top:426px;" width="16" height="16" viewBox="0 0 16 16"><path d="M1 0.8h6.6l3 3v10H1z" fill="#fdf9ea" stroke="#c9b06a" stroke-width="0.9" stroke-linejoin="round"/><path d="M3 3.500h4M3 5.500h6M3 7.500h6M3 9.500h6M3 11.500h4" stroke="#4a5f9a" stroke-width="1"/><path d="M14.6 4v6.4H9.4v-2l-3.4 3 3.4 3v-2h7V4z" fill="#fbe08a" stroke="#c98a1c" stroke-width="0.8" stroke-linejoin="round" transform="translate(-1.4 0)"/></svg>
<div style="left:1156px;top:423px;width:23px;height:21px;background:#b4d3f1;border:1px solid #83b8ea;"></div>
<div style="left:1179px;top:423px;width:23px;height:21px;background:#b4d3f1;border:1px solid #83b8ea;border-left:none;"></div>
<svg style="left:1160.5px;top:426.6px;" width="16" height="16" viewBox="0 0 16 16"><rect x="4.6" y="0.8" width="10.6" height="7.6" fill="#fff" stroke="#2f5fae" stroke-width="1.1"/><path d="M6.4 3.2h7M6.4 5.4h5" stroke="#2f5fae" stroke-width="0.9"/><rect x="0.8" y="5" width="6" height="5.6" fill="#dbe8fb" stroke="#2f5fae" stroke-width="1"/><path d="M3 10.8h1.8v1.4H3z" fill="#2f5fae"/><path d="M1.4 13h5" stroke="#2f5fae" stroke-width="1.4"/></svg>
<svg style="left:1183.5px;top:426.6px;" width="16" height="16" viewBox="0 0 16 16"><rect x="4.6" y="0.8" width="10.6" height="7.6" fill="#fff" stroke="#2f5fae" stroke-width="1.1"/><path d="M6.2 2.2l3.4 3.6M9.6 2.2L6.2 5.8" stroke="#e8272a" stroke-width="1.5"/><path d="M11 3.2h3M11 5.2h3" stroke="#2f5fae" stroke-width="0.9"/><rect x="0.8" y="5" width="6" height="5.6" fill="#dbe8fb" stroke="#2f5fae" stroke-width="1"/><path d="M3 10.8h1.8v1.4H3z" fill="#2f5fae"/><path d="M1.4 13h5" stroke="#2f5fae" stroke-width="1.4"/></svg>
<div style="left:1204px;top:425px;width:1px;height:18px;background:#4a4a4a;"></div>
<svg style="left:1215px;top:426.4px;" width="16" height="16" viewBox="0 0 16 16"><rect x="0.8" y="4" width="12" height="9.6" fill="#f8fbff" stroke="#8a9ab8" stroke-width="0.9"/><rect x="0.4" y="3.6" width="12.8" height="2.4" fill="#3d8ad6"/><path d="M7 9.2l2.6-2.6" stroke="#5a5a5a" stroke-width="1"/><path d="M8.6 5.2l2.4-3.6 3.6 2.8-3.2 3.2z" fill="#2f9a3f" stroke="#1f7a2f" stroke-width="0.7"/><circle cx="12.6" cy="2.8" r="1.9" fill="#3fae4f"/></svg>
<svg style="left:1239px;top:427px;" width="13.6" height="13.6" viewBox="0 0 13.6 13.6"><rect x="1" y="0.8" width="11.6" height="9" fill="#b5b5b5" stroke="#9a9a9a" stroke-width="0.8"/><rect x="2.6" y="2.4" width="8.4" height="5.8" fill="#f2f2f2"/><path d="M3.8 4.2h5.6M3.8 6.2h4" stroke="#a9a9a9" stroke-width="0.9"/><path d="M5 10h3.6v1.6H5z" fill="#a9a9a9"/><path d="M2.6 12.6h8.4" stroke="#a9a9a9" stroke-width="1.6"/></svg>
<svg style="left:1260px;top:432.4px;" width="7" height="4" viewBox="0 0 7 4"><path d="M0 0h7L3.5 4z" fill="#7a7a7a"/></svg>
<svg style="left:1275.4px;top:425.6px;" width="16" height="16" viewBox="0 0 16 16"><rect x="1.5" y="3.5" width="13" height="11" fill="#eaf3fd" stroke="#b29a58"/><rect x="1" y="3" width="14" height="2.6" fill="#3d8ad6"/><path d="M4 14c5-.5 8-3 9-7" stroke="#f3d27a" stroke-width="1.6" fill="none"/><path d="M12.6 0.6l1.300 2.100 2.300 1.300-2.300 1.300-1.300 2.100-1.300-2.100-2.300-1.300 2.300-1.300z" fill="#fff8d8" stroke="#c99a1a" stroke-width="1" stroke-linejoin="round"/><path d="M12.6 2.5v3M11.1 4.0h3" stroke="#fff" stroke-width="1"/></svg>
<svg style="left:1298px;top:432.4px;" width="7" height="4" viewBox="0 0 7 4"><path d="M0 0h7L3.5 4z" fill="#1a1a1a"/></svg>
<svg style="left:1315px;top:429px;" width="10" height="4" viewBox="0 0 10 4"><rect x="0.5" y="0.5" width="9" height="3" fill="#fff" stroke="#666"/></svg>
<svg style="left:1338px;top:429px;" width="10" height="10" viewBox="0 0 10 10"><rect x="0.5" y="0.5" width="9" height="9" fill="#fff" stroke="#666"/><path d="M0.500 2.500h9" stroke="#666" stroke-width="1"/></svg>
<div style="left:1344px;top:465px;width:17px;height:215px;background:#f0f0f0;"></div>
<div style="left:256px;top:680px;width:1105px;height:17px;background:#f0f0f0;border-radius:0 0 5px 5px;"></div>
<svg style="left:1347.5px;top:471.5px" width="10" height="7" viewBox="0 0 10 7"><path d="M1.5 5.3L5 1.9l3.5 3.4" fill="none" stroke="#c2c2c2" stroke-width="1.900"/></svg>
<svg style="left:1347.5px;top:667px" width="10" height="7" viewBox="0 0 10 7"><path d="M1.5 1.7L5 5.1l3.5-3.4" fill="none" stroke="#c2c2c2" stroke-width="1.900"/></svg>
<svg style="left:261.5px;top:683px" width="7" height="10" viewBox="0 0 7 10"><path d="M5.3 1.5L1.9 5l3.4 3.5" fill="none" stroke="#c2c2c2" stroke-width="1.900"/></svg>
<svg style="left:1331.5px;top:683px" width="7" height="10" viewBox="0 0 7 10"><path d="M1.7 1.5L5.1 5l-3.4 3.500" fill="none" stroke="#c2c2c2" stroke-width="1.900"/></svg>
<div style="left:1081px;top:707.5px;width:2px;height:2px;background:#aca48f;"></div>
<div style="left:1081px;top:712px;width:2px;height:2px;background:#aca48f;"></div>
<div style="left:1081px;top:716.5px;width:2px;height:2px;background:#aca48f;"></div>
<div style="left:1081px;top:721px;width:2px;height:2px;background:#aca48f;"></div>
<div style="left:445.5px;top:766px;width:41.0px;height:2px;background:#76b9ed;"></div>
<div style="left:592.5px;top:766px;width:40.0px;height:2px;background:#76b9ed;"></div>
<div style="left:690px;top:766px;width:40px;height:2px;background:#76b9ed;"></div>
<div style="left:789px;top:766px;width:40px;height:2px;background:#76b9ed;"></div>
<div style="left:935.5px;top:766px;width:40.0px;height:2px;background:#76b9ed;"></div>
<div style="left:984.5px;top:766px;width:40.0px;height:2px;background:#76b9ed;"></div>
<div style="left:1034px;top:766px;width:32px;height:2px;background:#76b9ed;"></div>
<div style="left:1079px;top:766px;width:48px;height:2px;background:#76b9ed;"></div>
<div style="left:1067.5px;top:766px;width:6.5px;height:2px;background:#4f7ea6;"></div>
<svg style="left:15.5px;top:739.5px" width="17" height="17" viewBox="0 0 17 17"><path d="M0 2.4L6.9 1.4v6.7H0zM7.9 1.3L17 0v8.1H7.9zM0 9.1h6.9v6.7L0 14.8zM7.9 9.1H17V17l-9.1-1.3z" fill="#fff"/></svg>
<svg style="left:57px;top:737.5px" width="22" height="22" viewBox="0 0 22 22"><circle cx="11" cy="11" r="9" fill="none" stroke="#8a8a8a" stroke-width="3.6"/><circle cx="11" cy="11" r="9" fill="none" stroke="#fff" stroke-width="2.3"/></svg>
<svg style="left:405.5px;top:741px" width="21" height="14" viewBox="0 0 21 14"><rect x="4.5" y="0.8" width="12" height="12.4" fill="none" stroke="#fff" stroke-width="1.3"/><path d="M2.4 2.6H0.7v8.8h1.7M18.6 2.6h1.7v8.8h-1.7" fill="none" stroke="#fff" stroke-width="1.2"/></svg>
<svg style="left:455.5px;top:737.5px" width="21" height="21" viewBox="0 0 21 21"><path d="M1 9.6C1.6 4 5.6 0.6 10.6 0.6c5.6 0 9.6 4 9.6 10v2.2H7.4c.2 2.6 2.4 4 5.2 4 2.2 0 4.2-.6 6-1.8v4c-2 1.1-4.200 1.600-6.800 1.600-5.600 0-9.400-3.400-9.400-8.600 0-3 1.600-5.600 4.200-7-1.200 1.200-1.800 2.600-2 4.000h9.800c0-2.800-1.600-4.600-4.400-4.600C6.400 4.400 3.200 6.200 1 9.600z" fill="#1a7fd8"/></svg>
<svg style="left:503.5px;top:739px" width="22" height="18" viewBox="0 0 22 18"><path d="M0.6 1.6c0-.6.400-1 1-1h6l1.600 1.800h11.200c.6 0 1 .4 1 1V16c0 .6-.4 1-1 1H1.600c-.6 0-1-.4-1-1z" fill="#f2c94c"/><path d="M0.600 5.200h20.800V16c0 .6-.4 1-1 1H1.600c-.6 0-1-.4-1-1z" fill="#fbdc74"/><path d="M5.200 11h11.600v6h-2.400v-3.400H7.600V17H5.200z" fill="#2b93e0"/><rect x="2" y="2" width="4" height="1" fill="#d9a520"/></svg>
<svg style="left:552px;top:736.5px" width="24.5" height="22.5" viewBox="0 0 24.5 22.5"><ellipse cx="12" cy="11.200" rx="11.400" ry="11" fill="#f7941e"/><ellipse cx="14" cy="11.200" rx="10.400" ry="10.600" fill="#2c2255"/><path d="M4.400 8.600h19M3.800 11.400h20.400M4.400 14.200h19" stroke="#fff" stroke-width="1.700"/></svg>
<svg style="left:1090px;top:736.5px" width="24.5" height="22.5" viewBox="0 0 24.5 22.5"><ellipse cx="12" cy="11.200" rx="11.400" ry="11" fill="#f7941e"/><ellipse cx="14" cy="11.200" rx="10.400" ry="10.600" fill="#2c2255"/><path d="M4.400 8.600h19M3.800 11.400h20.400M4.400 14.200h19" stroke="#fff" stroke-width="1.700"/></svg>
<svg style="left:600.5px;top:739.5px" width="25" height="18.5" viewBox="0 0 25 18.5"><g stroke="#1a1a1a" stroke-width="0.5"><path d="M1.600 1.600L12.500 0l10.900 1.600v4.600H1.600z" fill="#9a3f9a"/><path d="M1 6.200h23v5.200H1z" fill="#2f56c8"/><path d="M1.600 11.400h21.800v5.200L12.500 18.200 1.600 16.600z" fill="#2f9a3f"/></g><path d="M2.600 3.400h19.800M2.600 8.800h19.800M2.600 14h19.800" stroke="#fff" stroke-width="0.7" opacity=".55"/><rect x="11" y="0.400" width="3.600" height="17.600" fill="#c8a030" stroke="#6a5010" stroke-width="0.5"/><rect x="11.600" y="7.200" width="2.400" height="3.400" fill="#eee" stroke="#555" stroke-width="0.400"/></svg>
<svg style="left:650px;top:737.5px" width="23" height="20.5" viewBox="0 0 23 20.5"><rect x="9" y="2.400" width="13" height="15.600" fill="#fff" stroke="#80397b" stroke-width="1"/><path d="M19 4.600h3.600v2.800H19zM19 8.600h3.600v2.800H19zM19 12.600h3.600v2.800H19z" fill="#80397b"/><path d="M11.400 5.600h6M11.400 8.400h6M11.400 11.200h6M11.400 14h6" stroke="#80397b" stroke-width="0.9"/><path d="M0 2.200L13 0v20.500L0 18.200z" fill="#80397b"/><path d="M3.600 14.400V6h1.800l3.200 5.400V6h1.600v8.400H8.400L5.200 9v5.400z" fill="#fff"/></svg>
<svg style="left:699.5px;top:736.5px" width="22.5" height="22.5" viewBox="0 0 22.5 22.5"><circle cx="11.250" cy="11.250" r="11" fill="#fff"/><path d="M11.250 11.250L1.700 5.750A11 11 0 0 1 20.800 5.750z" fill="#e33b2e"/><path d="M11.250 11.250L20.800 5.750A11 11 0 0 1 11.250 22.250L11.250 22.250z" fill="#fbc116"/><path d="M11.250 11.250L11.250 22.250A11 11 0 0 1 1.700 5.750z" fill="#2da94f"/><path d="M11.250 5.750H20.800" stroke="#e33b2e" stroke-width="0"/><circle cx="11.250" cy="11.250" r="5.200" fill="#fff"/><circle cx="11.250" cy="11.250" r="4.100" fill="#4a8af4"/></svg>
<svg style="left:748px;top:736.5px" width="24" height="22.5" viewBox="0 0 24 22.5"><path d="M10.400 5.400C4.400 5.400 0.600 9 0.600 13.200c0 4 3.600 6.800 7.600 6.800 2.200 0 2.600-1.400 3.800-1.400 1.400 0 2 1.800 4.400 1.800 3.200 0 4.800-3 4.800-6.400 0-5-4.600-8.600-10.800-8.600z" fill="#c8d8ea" stroke="#8aa0c0" stroke-width="0.7"/><circle cx="5.200" cy="11.600" r="1.700" fill="#e8432e"/><circle cx="8.600" cy="8.800" r="1.700" fill="#f2c230"/><circle cx="13" cy="8.600" r="1.700" fill="#3fae4f"/><circle cx="5.600" cy="15.800" r="1.600" fill="#3a7ad8"/><path d="M20.200 3.600l1.600 1L13.200 21l-2-.4z" fill="#e8902a"/><path d="M20 3.800L21.800 0.200l2 1.600-2 3z" fill="#d8c8a8"/></svg>
<svg style="left:797.5px;top:737px" width="22.5" height="21" viewBox="0 0 22.5 21"><rect x="10" y="2.600" width="12" height="15.800" fill="#fff" stroke="#2b579a" stroke-width="0.9"/><path d="M13.400 5.200h7.200M13.400 7.600h7.200M13.400 10h7.200M13.400 12.400h7.200M13.400 14.800h7.200" stroke="#2b579a" stroke-width="1.100"/><path d="M0 2.200L13 0v21L0 18.800z" fill="#2b579a"/><path d="M2.600 6.800h1.600l1.100 5.400L6.600 6.800h1.400l1.300 5.400 1.100-5.400H12L10.200 14.400H8.600L7.300 9.200 6 14.400H4.400z" fill="#fff"/></svg>
<svg style="left:847px;top:736.5px" width="21.5" height="20.5" viewBox="0 0 21.5 20.5"><rect x="0.800" y="0.800" width="19.900" height="18.900" fill="#2a0806" stroke="#e8170c" stroke-width="1.500"/><path d="M4.400 15.600c1.600-.8 4.200-4.600 5.400-8.200.6-2 .4-3.600-.4-3.600s-1 1.800-.2 4c1 2.800 3.600 5.800 6.200 6 1.600.2 1.800-1 .400-1.400-2.400-.6-7.800.6-10.800 2.400-1.400.8-1.400 1.200-.6.800z" fill="none" stroke="#fff" stroke-width="1"/></svg>
<svg style="left:895px;top:736.5px" width="23" height="22" viewBox="0 0 23 22"><path d="M8.200 1.600L22 3.200 17.600 21.400 0.800 18.600z" fill="#bfe0f0" stroke="#6a8a9a" stroke-width="0.600"/><path d="M8.200 1.600L22 3.200l-.8 3.200-13.800-1.800z" fill="#e8f4fa"/><path d="M19.600 3l2.400.2-4.400 18.200-1.200-.2z" fill="#d8a850"/><path d="M7.400 6l11.600 1.600M6.400 9.400L18 11M5.400 12.800l11.400 1.600" stroke="#8ac0d8" stroke-width="0.700"/></svg>
<svg style="left:944.5px;top:736.5px" width="22.5" height="22.5" viewBox="0 0 22.5 22.5"><circle cx="7" cy="7" r="6.400" fill="#00aff0"/><circle cx="15.500" cy="15.500" r="6.400" fill="#00aff0"/><circle cx="11.250" cy="11.250" r="9.600" fill="#00aff0"/><text x="11.250" y="17.200" text-anchor="middle" font-family="Liberation Sans, sans-serif" font-weight="bold" font-size="16.500" fill="#fff">S</text></svg>
<svg style="left:993px;top:737px" width="23" height="21" viewBox="0 0 23 21"><rect x="10" y="4.600" width="12.500" height="11" fill="#fff" stroke="#0072c6" stroke-width="0.900"/><path d="M10.400 5l6 5.600 6-5.600" fill="none" stroke="#0072c6" stroke-width="1.200"/><path d="M0 2.200L13 0v21L0 18.800z" fill="#0072c6"/><ellipse cx="6.500" cy="10.500" rx="3" ry="3.800" fill="none" stroke="#fff" stroke-width="1.700"/></svg>
<svg style="left:1042px;top:736px" width="20.5" height="23" viewBox="0 0 20.5 23"><path d="M10.250 0.800L19.700 5.200v11.200l-9.450 5-9.450-5V5.200z" fill="#fff"/><path d="M10.250 2.200l7.300 3.300-7.300 3.300-7.300-3.300z" fill="#1a3666"/><path d="M1.900 6.700l7.600 3.500v9.700l-7.600-4z" fill="#23498c"/><path d="M11 10.200l7.600-3.500v9.200l-7.600 4z" fill="#e9eef8"/><path d="M12.600 11.400l4.400-2v5.400l-4.400 2.300z" fill="#1f3f7a"/><path d="M3.400 9l4.600 2.100v6l-4.600-2.400z" fill="#3f67b0"/><ellipse cx="10.250" cy="22.200" rx="5" ry="0.800" fill="#9ab0d0" opacity=".5"/></svg>
<svg style="left:1177px;top:745px" width="12" height="7" viewBox="0 0 12 7"><path d="M0.700 6.400L6 1l5.300 5.400" fill="none" stroke="#fff" stroke-width="1.300"/></svg>
<svg style="left:1198px;top:741.5px" width="17" height="12" viewBox="0 0 17 12"><rect x="5" y="2.600" width="10.400" height="6.800" fill="none" stroke="#fff" stroke-width="1.100"/><rect x="15.600" y="4.600" width="1.200" height="3" fill="#fff"/><rect x="6.400" y="4" width="4" height="4" fill="#fff"/><path d="M1.600 0.400v2.400M4 0.400v2.400M0.600 2.800h4.400v2.400c0 1-.8 1.800-2.200 1.800S0.600 6.200 0.600 5.200zM2.800 7v3.600" stroke="#fff" stroke-width="0.900" fill="none"/></svg>
<svg style="left:1222.5px;top:741.5px" width="16.5" height="13.5" viewBox="0 0 16.5 13.5"><rect x="3.600" y="0.600" width="12" height="8.400" fill="none" stroke="#fff" stroke-width="1.100"/><path d="M9.600 9v3M5.600 12.600h8" stroke="#fff" stroke-width="1.100"/><rect x="0.600" y="2" width="4.600" height="5" fill="#04050a" stroke="#fff" stroke-width="0.900"/><path d="M2.900 7v5.600" stroke="#fff" stroke-width="0.900"/></svg>
<svg style="left:1246.5px;top:741.5px" width="17" height="13.5" viewBox="0 0 17 13.5"><path d="M0.600 4.400h3L7.400 0.800v11.800L3.600 9h-3z" fill="none" stroke="#fff" stroke-width="1.100" stroke-linejoin="round"/><path d="M9.600 4.200c1.200 1.400 1.200 3.600 0 5" stroke="#fff" stroke-width="1" fill="none"/><path d="M12 2.400c2 2.400 2 6.200 0 8.600" stroke="#bbb" stroke-width="0.900" fill="none"/><path d="M14.400 0.800c2.600 3.400 2.600 8.400 0 11.800" stroke="#777" stroke-width="0.900" fill="none"/></svg>
<svg style="left:1271px;top:740px" width="16" height="16.5" viewBox="0 0 16 16.5"><path d="M0.400 0.400h15.200v12H10L8 15.600 6 12.400H0.400z" fill="#fff"/><path d="M3 3.600h10M3 6.200h10M3 8.800h7" stroke="#04050a" stroke-width="1.100"/></svg>
<div style="left:1360px;top:728px;width:1px;height:40px;background:#6a6a6a;"></div>
</body></html>
